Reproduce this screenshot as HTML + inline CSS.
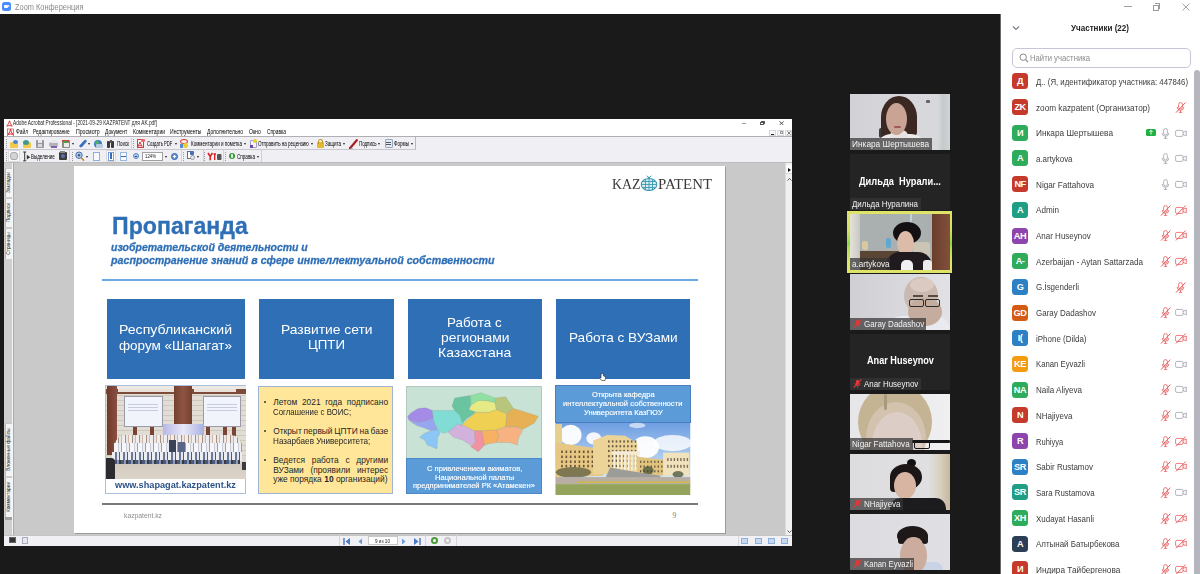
<!DOCTYPE html>
<html><head><meta charset="utf-8"><style>
*{margin:0;padding:0;box-sizing:border-box}
html,body{width:1200px;height:574px;overflow:hidden;background:#1a1a1a;font-family:"Liberation Sans",sans-serif}
.a{position:absolute}
.av{position:absolute;left:1012px;width:16px;height:16px;border-radius:3.5px;color:#fff;font-weight:bold;font-size:9.2px;line-height:16.5px;text-align:center;letter-spacing:-0.5px}
.pn{position:absolute;left:1036px;font-size:10.5px;color:#3a3a3a;line-height:16px;white-space:nowrap}
.ic{position:absolute}
.tile{position:absolute;left:850px;width:100px;height:56px;overflow:hidden;background:#242424}
.lbl{position:absolute;left:0;bottom:0;height:12px;background:rgba(20,20,20,.65);color:#eee;font-size:8.5px;line-height:12px;padding:0 3px;white-space:nowrap}
.mt{font-size:6px;color:#222;white-space:nowrap;position:absolute;line-height:8px}
.bx{position:absolute;background:#2f70b7;color:#fff;text-align:center;display:flex;align-items:center;justify-content:center;font-size:13px;line-height:15px}

.sl{font-family:"Liberation Sans",sans-serif}
</style></head><body>
<div class="a" style="left:0;top:0;width:1001px;height:14px;background:#fff"></div>
<div class="a" style="left:2px;top:2px;width:9px;height:9px;border-radius:2.5px;background:#4a8cff"></div>
<div class="a" style="left:4px;top:5px;width:4px;height:3px;background:#fff;border-radius:1px"></div>
<div class="a" style="left:8px;top:5px;width:0;height:0;border-top:1.5px solid transparent;border-bottom:1.5px solid transparent;border-left:2px solid #fff"></div>
<div style="position:absolute;left:14.50px;top:1.66px;font-family:'Liberation Sans',sans-serif;font-size:8.6px;line-height:10.32px;color:#8a8a8a;white-space:nowrap;transform:scaleX(0.8619);transform-origin:0 0;">Zoom Конференция</div>
<div class="a" style="left:1000px;top:14px;width:1px;height:560px;background:#6a6a6a"></div>
<div class="a" style="left:1001px;top:0;width:199px;height:574px;background:#fff"></div>
<div class="a" style="left:1124px;top:6px;width:7.5px;height:1px;background:#a0a0a0"></div>
<div class="a" style="left:1153px;top:5px;width:5.5px;height:5.5px;border:1px solid #9a9a9a;background:#fff"></div>
<div class="a" style="left:1154.8px;top:3.2px;width:5.5px;height:5.5px;border-top:1px solid #9a9a9a;border-right:1px solid #9a9a9a"></div>
<svg class="a" style="left:1182px;top:3px" width="8" height="8"><path d="M0.5 0.5L7.5 7.5M7.5 0.5L0.5 7.5" stroke="#9a9a9a" stroke-width="0.9"/></svg>
<svg class="a" style="left:1012px;top:25px" width="8" height="6"><path d="M1 1.5L4 4.5L7 1.5" stroke="#7a7a8a" stroke-width="1.2" fill="none"/></svg>
<div style="position:absolute;left:1071.00px;top:22.01px;font-family:'Liberation Sans',sans-serif;font-size:9.5px;line-height:11.40px;color:#232323;white-space:nowrap;font-weight:bold;transform:scaleX(0.8485);transform-origin:0 0;">Участники (22)</div>
<div class="a" style="left:1012px;top:48px;width:179px;height:20px;border:1px solid #c6c6d8;border-radius:5px;background:#fff"></div>
<svg class="a" style="left:1019px;top:53px" width="10" height="10"><circle cx="4.2" cy="4.2" r="3.2" stroke="#8a8a8a" stroke-width="1" fill="none"/><path d="M6.6 6.6L9 9" stroke="#8a8a8a" stroke-width="1.1"/></svg>
<div style="position:absolute;left:1030.00px;top:52.01px;font-family:'Liberation Sans',sans-serif;font-size:9.5px;line-height:11.40px;color:#8c8c8c;white-space:nowrap;transform:scaleX(0.8104);transform-origin:0 0;">Найти участника</div>
<div class="a" style="left:1194px;top:70px;width:6px;height:504px;background:#b6b6be;border-radius:3px 3px 0 0"></div>
<div class="av" style="top:73.4px;background:#c63a2c">Д</div>
<div style="position:absolute;left:1036.00px;top:76.01px;font-family:'Liberation Sans',sans-serif;font-size:9.5px;line-height:11.40px;color:#3c3c3c;white-space:nowrap;transform:scaleX(0.8210);transform-origin:0 0;">Д.. (Я, идентификатор участника: 447846)</div>
<div class="av" style="top:99.1px;background:#c63a2c">ZK</div>
<div style="position:absolute;left:1036.00px;top:101.69px;font-family:'Liberation Sans',sans-serif;font-size:9.5px;line-height:11.40px;color:#3c3c3c;white-space:nowrap;transform:scaleX(0.8634);transform-origin:0 0;">zoom kazpatent (Организатор)</div>
<svg class="ic" style="left:1175px;top:101.9px" width="11" height="11" viewBox="0 0 11 11"><rect x="3.6" y="0.6" width="3.8" height="6.4" rx="1.9" fill="none" stroke="#e85a5c" stroke-width="0.8"/><path d="M2.2 5Q2.2 8.3 5.5 8.3Q8.8 8.3 8.8 5M5.5 8.3V10.4M3.8 10.4H7.2" fill="none" stroke="#e85a5c" stroke-width="0.8"/><path d="M1 10.6L10.4 0.6" stroke="#e85a5c" stroke-width="1"/></svg>
<div class="av" style="top:124.8px;background:#2eab5b">И</div>
<div style="position:absolute;left:1036.00px;top:127.37px;font-family:'Liberation Sans',sans-serif;font-size:9.5px;line-height:11.40px;color:#3c3c3c;white-space:nowrap;transform:scaleX(0.8720);transform-origin:0 0;">Инкара Шертышева</div>
<div class="a" style="left:1145.5px;top:128.7px;width:10px;height:7.5px;background:#1fb141;border-radius:1.5px"></div>
<svg class="ic" style="left:1147.5px;top:129.4px" width="6" height="6"><path d="M3 5.6V1.4M1.3 3L3 1.3L4.7 3" stroke="#fff" stroke-width="0.9" fill="none"/></svg>
<svg class="ic" style="left:1160px;top:127.6px" width="11" height="11" viewBox="0 0 11 11"><rect x="3.6" y="0.6" width="3.8" height="6.4" rx="1.9" fill="none" stroke="#a0a0aa" stroke-width="0.8"/><path d="M2.2 5Q2.2 8.3 5.5 8.3Q8.8 8.3 8.8 5M5.5 8.3V10.4M3.8 10.4H7.2" fill="none" stroke="#a0a0aa" stroke-width="0.8"/></svg>
<svg class="ic" style="left:1175px;top:127.6px" width="12" height="11" viewBox="0 0 12 11"><rect x="0.6" y="2.4" width="7.4" height="6" rx="1.2" fill="none" stroke="#a0a0aa" stroke-width="0.8"/><path d="M8 4.4L11.3 3V7.8L8 6.4" fill="none" stroke="#a0a0aa" stroke-width="0.8"/></svg>
<div class="av" style="top:150.4px;background:#2eab5b">A</div>
<div style="position:absolute;left:1036.00px;top:153.05px;font-family:'Liberation Sans',sans-serif;font-size:9.5px;line-height:11.40px;color:#3c3c3c;white-space:nowrap;transform:scaleX(0.8328);transform-origin:0 0;">a.artykova</div>
<svg class="ic" style="left:1160px;top:153.2px" width="11" height="11" viewBox="0 0 11 11"><rect x="3.6" y="0.6" width="3.8" height="6.4" rx="1.9" fill="none" stroke="#a0a0aa" stroke-width="0.8"/><path d="M2.2 5Q2.2 8.3 5.5 8.3Q8.8 8.3 8.8 5M5.5 8.3V10.4M3.8 10.4H7.2" fill="none" stroke="#a0a0aa" stroke-width="0.8"/></svg>
<svg class="ic" style="left:1175px;top:153.2px" width="12" height="11" viewBox="0 0 12 11"><rect x="0.6" y="2.4" width="7.4" height="6" rx="1.2" fill="none" stroke="#a0a0aa" stroke-width="0.8"/><path d="M8 4.4L11.3 3V7.8L8 6.4" fill="none" stroke="#a0a0aa" stroke-width="0.8"/></svg>
<div class="av" style="top:176.1px;background:#c63a2c">NF</div>
<div style="position:absolute;left:1036.00px;top:178.73px;font-family:'Liberation Sans',sans-serif;font-size:9.5px;line-height:11.40px;color:#3c3c3c;white-space:nowrap;transform:scaleX(0.8581);transform-origin:0 0;">Nigar Fattahova</div>
<svg class="ic" style="left:1160px;top:178.9px" width="11" height="11" viewBox="0 0 11 11"><rect x="3.6" y="0.6" width="3.8" height="6.4" rx="1.9" fill="none" stroke="#a0a0aa" stroke-width="0.8"/><path d="M2.2 5Q2.2 8.3 5.5 8.3Q8.8 8.3 8.8 5M5.5 8.3V10.4M3.8 10.4H7.2" fill="none" stroke="#a0a0aa" stroke-width="0.8"/></svg>
<svg class="ic" style="left:1175px;top:178.9px" width="12" height="11" viewBox="0 0 12 11"><rect x="0.6" y="2.4" width="7.4" height="6" rx="1.2" fill="none" stroke="#a0a0aa" stroke-width="0.8"/><path d="M8 4.4L11.3 3V7.8L8 6.4" fill="none" stroke="#a0a0aa" stroke-width="0.8"/></svg>
<div class="av" style="top:201.8px;background:#1f9e84">A</div>
<div style="position:absolute;left:1036.00px;top:204.41px;font-family:'Liberation Sans',sans-serif;font-size:9.5px;line-height:11.40px;color:#3c3c3c;white-space:nowrap;transform:scaleX(0.8541);transform-origin:0 0;">Admin</div>
<svg class="ic" style="left:1160px;top:204.6px" width="11" height="11" viewBox="0 0 11 11"><rect x="3.6" y="0.6" width="3.8" height="6.4" rx="1.9" fill="none" stroke="#e85a5c" stroke-width="0.8"/><path d="M2.2 5Q2.2 8.3 5.5 8.3Q8.8 8.3 8.8 5M5.5 8.3V10.4M3.8 10.4H7.2" fill="none" stroke="#e85a5c" stroke-width="0.8"/><path d="M1 10.6L10.4 0.6" stroke="#e85a5c" stroke-width="1"/></svg>
<svg class="ic" style="left:1175px;top:204.6px" width="12" height="11" viewBox="0 0 12 11"><rect x="0.6" y="2.4" width="7.4" height="6" rx="1.2" fill="none" stroke="#e85a5c" stroke-width="0.8"/><path d="M8 4.4L11.3 3V7.8L8 6.4" fill="none" stroke="#e85a5c" stroke-width="0.8"/><path d="M1 10.4L10.6 0.6" stroke="#e85a5c" stroke-width="1"/></svg>
<div class="av" style="top:227.5px;background:#8e44ad">AH</div>
<div style="position:absolute;left:1036.00px;top:230.09px;font-family:'Liberation Sans',sans-serif;font-size:9.5px;line-height:11.40px;color:#3c3c3c;white-space:nowrap;transform:scaleX(0.8422);transform-origin:0 0;">Anar Huseynov</div>
<svg class="ic" style="left:1160px;top:230.3px" width="11" height="11" viewBox="0 0 11 11"><rect x="3.6" y="0.6" width="3.8" height="6.4" rx="1.9" fill="none" stroke="#e85a5c" stroke-width="0.8"/><path d="M2.2 5Q2.2 8.3 5.5 8.3Q8.8 8.3 8.8 5M5.5 8.3V10.4M3.8 10.4H7.2" fill="none" stroke="#e85a5c" stroke-width="0.8"/><path d="M1 10.6L10.4 0.6" stroke="#e85a5c" stroke-width="1"/></svg>
<svg class="ic" style="left:1175px;top:230.3px" width="12" height="11" viewBox="0 0 12 11"><rect x="0.6" y="2.4" width="7.4" height="6" rx="1.2" fill="none" stroke="#e85a5c" stroke-width="0.8"/><path d="M8 4.4L11.3 3V7.8L8 6.4" fill="none" stroke="#e85a5c" stroke-width="0.8"/><path d="M1 10.4L10.6 0.6" stroke="#e85a5c" stroke-width="1"/></svg>
<div class="av" style="top:253.2px;background:#2eab5b">A-</div>
<div style="position:absolute;left:1036.00px;top:255.77px;font-family:'Liberation Sans',sans-serif;font-size:9.5px;line-height:11.40px;color:#3c3c3c;white-space:nowrap;transform:scaleX(0.8525);transform-origin:0 0;">Azerbaijan - Aytan Sattarzada</div>
<svg class="ic" style="left:1160px;top:256.0px" width="11" height="11" viewBox="0 0 11 11"><rect x="3.6" y="0.6" width="3.8" height="6.4" rx="1.9" fill="none" stroke="#e85a5c" stroke-width="0.8"/><path d="M2.2 5Q2.2 8.3 5.5 8.3Q8.8 8.3 8.8 5M5.5 8.3V10.4M3.8 10.4H7.2" fill="none" stroke="#e85a5c" stroke-width="0.8"/><path d="M1 10.6L10.4 0.6" stroke="#e85a5c" stroke-width="1"/></svg>
<svg class="ic" style="left:1175px;top:256.0px" width="12" height="11" viewBox="0 0 12 11"><rect x="0.6" y="2.4" width="7.4" height="6" rx="1.2" fill="none" stroke="#e85a5c" stroke-width="0.8"/><path d="M8 4.4L11.3 3V7.8L8 6.4" fill="none" stroke="#e85a5c" stroke-width="0.8"/><path d="M1 10.4L10.6 0.6" stroke="#e85a5c" stroke-width="1"/></svg>
<div class="av" style="top:278.8px;background:#2d80c4">G</div>
<div style="position:absolute;left:1036.00px;top:281.45px;font-family:'Liberation Sans',sans-serif;font-size:9.5px;line-height:11.40px;color:#3c3c3c;white-space:nowrap;transform:scaleX(0.8395);transform-origin:0 0;">G.İsgenderli</div>
<svg class="ic" style="left:1175px;top:281.6px" width="11" height="11" viewBox="0 0 11 11"><rect x="3.6" y="0.6" width="3.8" height="6.4" rx="1.9" fill="none" stroke="#e85a5c" stroke-width="0.8"/><path d="M2.2 5Q2.2 8.3 5.5 8.3Q8.8 8.3 8.8 5M5.5 8.3V10.4M3.8 10.4H7.2" fill="none" stroke="#e85a5c" stroke-width="0.8"/><path d="M1 10.6L10.4 0.6" stroke="#e85a5c" stroke-width="1"/></svg>
<div class="av" style="top:304.5px;background:#d55a12">GD</div>
<div style="position:absolute;left:1036.00px;top:307.13px;font-family:'Liberation Sans',sans-serif;font-size:9.5px;line-height:11.40px;color:#3c3c3c;white-space:nowrap;transform:scaleX(0.8416);transform-origin:0 0;">Garay Dadashov</div>
<svg class="ic" style="left:1160px;top:307.3px" width="11" height="11" viewBox="0 0 11 11"><rect x="3.6" y="0.6" width="3.8" height="6.4" rx="1.9" fill="none" stroke="#e85a5c" stroke-width="0.8"/><path d="M2.2 5Q2.2 8.3 5.5 8.3Q8.8 8.3 8.8 5M5.5 8.3V10.4M3.8 10.4H7.2" fill="none" stroke="#e85a5c" stroke-width="0.8"/><path d="M1 10.6L10.4 0.6" stroke="#e85a5c" stroke-width="1"/></svg>
<svg class="ic" style="left:1175px;top:307.3px" width="12" height="11" viewBox="0 0 12 11"><rect x="0.6" y="2.4" width="7.4" height="6" rx="1.2" fill="none" stroke="#a0a0aa" stroke-width="0.8"/><path d="M8 4.4L11.3 3V7.8L8 6.4" fill="none" stroke="#a0a0aa" stroke-width="0.8"/></svg>
<div class="av" style="top:330.2px;background:#2d80c4">I(</div>
<div style="position:absolute;left:1036.00px;top:332.81px;font-family:'Liberation Sans',sans-serif;font-size:9.5px;line-height:11.40px;color:#3c3c3c;white-space:nowrap;transform:scaleX(0.8389);transform-origin:0 0;">iPhone (Dilda)</div>
<svg class="ic" style="left:1160px;top:333.0px" width="11" height="11" viewBox="0 0 11 11"><rect x="3.6" y="0.6" width="3.8" height="6.4" rx="1.9" fill="none" stroke="#e85a5c" stroke-width="0.8"/><path d="M2.2 5Q2.2 8.3 5.5 8.3Q8.8 8.3 8.8 5M5.5 8.3V10.4M3.8 10.4H7.2" fill="none" stroke="#e85a5c" stroke-width="0.8"/><path d="M1 10.6L10.4 0.6" stroke="#e85a5c" stroke-width="1"/></svg>
<svg class="ic" style="left:1175px;top:333.0px" width="12" height="11" viewBox="0 0 12 11"><rect x="0.6" y="2.4" width="7.4" height="6" rx="1.2" fill="none" stroke="#e85a5c" stroke-width="0.8"/><path d="M8 4.4L11.3 3V7.8L8 6.4" fill="none" stroke="#e85a5c" stroke-width="0.8"/><path d="M1 10.4L10.6 0.6" stroke="#e85a5c" stroke-width="1"/></svg>
<div class="av" style="top:355.9px;background:#f39c12">KE</div>
<div style="position:absolute;left:1036.00px;top:358.49px;font-family:'Liberation Sans',sans-serif;font-size:9.5px;line-height:11.40px;color:#3c3c3c;white-space:nowrap;transform:scaleX(0.8139);transform-origin:0 0;">Kanan Eyvazli</div>
<svg class="ic" style="left:1160px;top:358.7px" width="11" height="11" viewBox="0 0 11 11"><rect x="3.6" y="0.6" width="3.8" height="6.4" rx="1.9" fill="none" stroke="#e85a5c" stroke-width="0.8"/><path d="M2.2 5Q2.2 8.3 5.5 8.3Q8.8 8.3 8.8 5M5.5 8.3V10.4M3.8 10.4H7.2" fill="none" stroke="#e85a5c" stroke-width="0.8"/><path d="M1 10.6L10.4 0.6" stroke="#e85a5c" stroke-width="1"/></svg>
<svg class="ic" style="left:1175px;top:358.7px" width="12" height="11" viewBox="0 0 12 11"><rect x="0.6" y="2.4" width="7.4" height="6" rx="1.2" fill="none" stroke="#a0a0aa" stroke-width="0.8"/><path d="M8 4.4L11.3 3V7.8L8 6.4" fill="none" stroke="#a0a0aa" stroke-width="0.8"/></svg>
<div class="av" style="top:381.6px;background:#2eab5b">NA</div>
<div style="position:absolute;left:1036.00px;top:384.17px;font-family:'Liberation Sans',sans-serif;font-size:9.5px;line-height:11.40px;color:#3c3c3c;white-space:nowrap;transform:scaleX(0.8457);transform-origin:0 0;">Naila Aliyeva</div>
<svg class="ic" style="left:1160px;top:384.4px" width="11" height="11" viewBox="0 0 11 11"><rect x="3.6" y="0.6" width="3.8" height="6.4" rx="1.9" fill="none" stroke="#e85a5c" stroke-width="0.8"/><path d="M2.2 5Q2.2 8.3 5.5 8.3Q8.8 8.3 8.8 5M5.5 8.3V10.4M3.8 10.4H7.2" fill="none" stroke="#e85a5c" stroke-width="0.8"/><path d="M1 10.6L10.4 0.6" stroke="#e85a5c" stroke-width="1"/></svg>
<svg class="ic" style="left:1175px;top:384.4px" width="12" height="11" viewBox="0 0 12 11"><rect x="0.6" y="2.4" width="7.4" height="6" rx="1.2" fill="none" stroke="#a0a0aa" stroke-width="0.8"/><path d="M8 4.4L11.3 3V7.8L8 6.4" fill="none" stroke="#a0a0aa" stroke-width="0.8"/></svg>
<div class="av" style="top:407.2px;background:#c63a2c">N</div>
<div style="position:absolute;left:1036.00px;top:409.85px;font-family:'Liberation Sans',sans-serif;font-size:9.5px;line-height:11.40px;color:#3c3c3c;white-space:nowrap;transform:scaleX(0.8408);transform-origin:0 0;">NHajiyeva</div>
<svg class="ic" style="left:1160px;top:410.0px" width="11" height="11" viewBox="0 0 11 11"><rect x="3.6" y="0.6" width="3.8" height="6.4" rx="1.9" fill="none" stroke="#e85a5c" stroke-width="0.8"/><path d="M2.2 5Q2.2 8.3 5.5 8.3Q8.8 8.3 8.8 5M5.5 8.3V10.4M3.8 10.4H7.2" fill="none" stroke="#e85a5c" stroke-width="0.8"/><path d="M1 10.6L10.4 0.6" stroke="#e85a5c" stroke-width="1"/></svg>
<svg class="ic" style="left:1175px;top:410.0px" width="12" height="11" viewBox="0 0 12 11"><rect x="0.6" y="2.4" width="7.4" height="6" rx="1.2" fill="none" stroke="#a0a0aa" stroke-width="0.8"/><path d="M8 4.4L11.3 3V7.8L8 6.4" fill="none" stroke="#a0a0aa" stroke-width="0.8"/></svg>
<div class="av" style="top:432.9px;background:#8e44ad">R</div>
<div style="position:absolute;left:1036.00px;top:435.53px;font-family:'Liberation Sans',sans-serif;font-size:9.5px;line-height:11.40px;color:#3c3c3c;white-space:nowrap;transform:scaleX(0.7954);transform-origin:0 0;">Ruhiyya</div>
<svg class="ic" style="left:1160px;top:435.7px" width="11" height="11" viewBox="0 0 11 11"><rect x="3.6" y="0.6" width="3.8" height="6.4" rx="1.9" fill="none" stroke="#e85a5c" stroke-width="0.8"/><path d="M2.2 5Q2.2 8.3 5.5 8.3Q8.8 8.3 8.8 5M5.5 8.3V10.4M3.8 10.4H7.2" fill="none" stroke="#e85a5c" stroke-width="0.8"/><path d="M1 10.6L10.4 0.6" stroke="#e85a5c" stroke-width="1"/></svg>
<svg class="ic" style="left:1175px;top:435.7px" width="12" height="11" viewBox="0 0 12 11"><rect x="0.6" y="2.4" width="7.4" height="6" rx="1.2" fill="none" stroke="#e85a5c" stroke-width="0.8"/><path d="M8 4.4L11.3 3V7.8L8 6.4" fill="none" stroke="#e85a5c" stroke-width="0.8"/><path d="M1 10.4L10.6 0.6" stroke="#e85a5c" stroke-width="1"/></svg>
<div class="av" style="top:458.6px;background:#2d80c4">SR</div>
<div style="position:absolute;left:1036.00px;top:461.21px;font-family:'Liberation Sans',sans-serif;font-size:9.5px;line-height:11.40px;color:#3c3c3c;white-space:nowrap;transform:scaleX(0.8434);transform-origin:0 0;">Sabir Rustamov</div>
<svg class="ic" style="left:1160px;top:461.4px" width="11" height="11" viewBox="0 0 11 11"><rect x="3.6" y="0.6" width="3.8" height="6.4" rx="1.9" fill="none" stroke="#e85a5c" stroke-width="0.8"/><path d="M2.2 5Q2.2 8.3 5.5 8.3Q8.8 8.3 8.8 5M5.5 8.3V10.4M3.8 10.4H7.2" fill="none" stroke="#e85a5c" stroke-width="0.8"/><path d="M1 10.6L10.4 0.6" stroke="#e85a5c" stroke-width="1"/></svg>
<svg class="ic" style="left:1175px;top:461.4px" width="12" height="11" viewBox="0 0 12 11"><rect x="0.6" y="2.4" width="7.4" height="6" rx="1.2" fill="none" stroke="#e85a5c" stroke-width="0.8"/><path d="M8 4.4L11.3 3V7.8L8 6.4" fill="none" stroke="#e85a5c" stroke-width="0.8"/><path d="M1 10.4L10.6 0.6" stroke="#e85a5c" stroke-width="1"/></svg>
<div class="av" style="top:484.3px;background:#1f9e84">SR</div>
<div style="position:absolute;left:1036.00px;top:486.89px;font-family:'Liberation Sans',sans-serif;font-size:9.5px;line-height:11.40px;color:#3c3c3c;white-space:nowrap;transform:scaleX(0.8268);transform-origin:0 0;">Sara Rustamova</div>
<svg class="ic" style="left:1160px;top:487.1px" width="11" height="11" viewBox="0 0 11 11"><rect x="3.6" y="0.6" width="3.8" height="6.4" rx="1.9" fill="none" stroke="#e85a5c" stroke-width="0.8"/><path d="M2.2 5Q2.2 8.3 5.5 8.3Q8.8 8.3 8.8 5M5.5 8.3V10.4M3.8 10.4H7.2" fill="none" stroke="#e85a5c" stroke-width="0.8"/><path d="M1 10.6L10.4 0.6" stroke="#e85a5c" stroke-width="1"/></svg>
<svg class="ic" style="left:1175px;top:487.1px" width="12" height="11" viewBox="0 0 12 11"><rect x="0.6" y="2.4" width="7.4" height="6" rx="1.2" fill="none" stroke="#a0a0aa" stroke-width="0.8"/><path d="M8 4.4L11.3 3V7.8L8 6.4" fill="none" stroke="#a0a0aa" stroke-width="0.8"/></svg>
<div class="av" style="top:510.0px;background:#2eab5b">XH</div>
<div style="position:absolute;left:1036.00px;top:512.57px;font-family:'Liberation Sans',sans-serif;font-size:9.5px;line-height:11.40px;color:#3c3c3c;white-space:nowrap;transform:scaleX(0.8384);transform-origin:0 0;">Xudayat Hasanli</div>
<svg class="ic" style="left:1160px;top:512.8px" width="11" height="11" viewBox="0 0 11 11"><rect x="3.6" y="0.6" width="3.8" height="6.4" rx="1.9" fill="none" stroke="#e85a5c" stroke-width="0.8"/><path d="M2.2 5Q2.2 8.3 5.5 8.3Q8.8 8.3 8.8 5M5.5 8.3V10.4M3.8 10.4H7.2" fill="none" stroke="#e85a5c" stroke-width="0.8"/><path d="M1 10.6L10.4 0.6" stroke="#e85a5c" stroke-width="1"/></svg>
<svg class="ic" style="left:1175px;top:512.8px" width="12" height="11" viewBox="0 0 12 11"><rect x="0.6" y="2.4" width="7.4" height="6" rx="1.2" fill="none" stroke="#e85a5c" stroke-width="0.8"/><path d="M8 4.4L11.3 3V7.8L8 6.4" fill="none" stroke="#e85a5c" stroke-width="0.8"/><path d="M1 10.4L10.6 0.6" stroke="#e85a5c" stroke-width="1"/></svg>
<div class="av" style="top:535.6px;background:#2c3e55">A</div>
<div style="position:absolute;left:1036.00px;top:538.25px;font-family:'Liberation Sans',sans-serif;font-size:9.5px;line-height:11.40px;color:#3c3c3c;white-space:nowrap;transform:scaleX(0.8365);transform-origin:0 0;">Алтынай Батырбекова</div>
<svg class="ic" style="left:1160px;top:538.4px" width="11" height="11" viewBox="0 0 11 11"><rect x="3.6" y="0.6" width="3.8" height="6.4" rx="1.9" fill="none" stroke="#e85a5c" stroke-width="0.8"/><path d="M2.2 5Q2.2 8.3 5.5 8.3Q8.8 8.3 8.8 5M5.5 8.3V10.4M3.8 10.4H7.2" fill="none" stroke="#e85a5c" stroke-width="0.8"/><path d="M1 10.6L10.4 0.6" stroke="#e85a5c" stroke-width="1"/></svg>
<svg class="ic" style="left:1175px;top:538.4px" width="12" height="11" viewBox="0 0 12 11"><rect x="0.6" y="2.4" width="7.4" height="6" rx="1.2" fill="none" stroke="#e85a5c" stroke-width="0.8"/><path d="M8 4.4L11.3 3V7.8L8 6.4" fill="none" stroke="#e85a5c" stroke-width="0.8"/><path d="M1 10.4L10.6 0.6" stroke="#e85a5c" stroke-width="1"/></svg>
<div class="av" style="top:561.3px;background:#c63a2c">И</div>
<div style="position:absolute;left:1036.00px;top:563.93px;font-family:'Liberation Sans',sans-serif;font-size:9.5px;line-height:11.40px;color:#3c3c3c;white-space:nowrap;transform:scaleX(0.8665);transform-origin:0 0;">Индира Тайбергенова</div>
<svg class="ic" style="left:1160px;top:564.1px" width="11" height="11" viewBox="0 0 11 11"><rect x="3.6" y="0.6" width="3.8" height="6.4" rx="1.9" fill="none" stroke="#e85a5c" stroke-width="0.8"/><path d="M2.2 5Q2.2 8.3 5.5 8.3Q8.8 8.3 8.8 5M5.5 8.3V10.4M3.8 10.4H7.2" fill="none" stroke="#e85a5c" stroke-width="0.8"/><path d="M1 10.6L10.4 0.6" stroke="#e85a5c" stroke-width="1"/></svg>
<svg class="ic" style="left:1175px;top:564.1px" width="12" height="11" viewBox="0 0 12 11"><rect x="0.6" y="2.4" width="7.4" height="6" rx="1.2" fill="none" stroke="#e85a5c" stroke-width="0.8"/><path d="M8 4.4L11.3 3V7.8L8 6.4" fill="none" stroke="#e85a5c" stroke-width="0.8"/><path d="M1 10.4L10.6 0.6" stroke="#e85a5c" stroke-width="1"/></svg>
<div class="tile" style="top:94px;height:56px"><div class="a" style="left:0;top:0;width:100px;height:56px;filter:blur(0.7px)"><div class="a" style="left:0px;top:0px;width:100px;height:56px;background:linear-gradient(90deg,#d2d2d6 0%,#d8d8dc 60%,#d6d8da 88%,#c4cacc 93%,#d0d4d4 100%);border-radius:0;"></div><div class="a" style="left:76px;top:6px;width:4px;height:3px;background:#666;border-radius:1px;"></div><div class="a" style="left:29px;top:34px;width:8px;height:10px;background:#3a3a3a;border-radius:2px;"></div><div class="a" style="left:31px;top:2px;width:36px;height:42px;background:#3c2822;border-radius:50%;"></div><div class="a" style="left:31px;top:22px;width:10px;height:24px;background:#3c2822;border-radius:0 0 4px 6px;"></div><div class="a" style="left:57px;top:22px;width:10px;height:22px;background:#3c2822;border-radius:0 0 6px 4px;"></div><div class="a" style="left:24px;top:40px;width:54px;height:18px;background:#edeaea;border-radius:18px 18px 0 0;"></div><div class="a" style="left:40px;top:36px;width:18px;height:12px;background:#e8e2e0;border-radius:6px;"></div><div class="a" style="left:36px;top:9px;width:21px;height:32px;background:#c9a394;border-radius:50%;"></div><div class="a" style="left:44px;top:32px;width:7px;height:2px;background:#a05a5a;border-radius:1px;"></div></div><div class="a" style="left:0;top:44px;width:81.6px;height:12px;background:rgba(52,52,54,.72)"></div><div style="position:absolute;left:2.20px;top:44.66px;font-family:'Liberation Sans',sans-serif;font-size:8.6px;line-height:10.32px;color:#f2f2f2;white-space:nowrap;transform:scaleX(0.9670);transform-origin:0 0;">Инкара Шертышева</div></div>
<div class="tile" style="top:154px;height:56px"><div style="position:absolute;left:8.50px;top:21.76px;font-family:'Liberation Sans',sans-serif;font-size:10.4px;line-height:12.48px;color:#ffffff;white-space:pre;font-weight:bold;transform:scaleX(0.8920);transform-origin:0 0;">Дильда  Нурали...</div><div class="a" style="left:0;top:44px;width:70.5px;height:12px;background:rgba(52,52,54,.72)"></div><div style="position:absolute;left:2.20px;top:44.66px;font-family:'Liberation Sans',sans-serif;font-size:8.6px;line-height:10.32px;color:#f2f2f2;white-space:nowrap;transform:scaleX(0.9211);transform-origin:0 0;">Дильда Нуралина</div></div>
<div class="a" style="left:847.2px;top:210.9px;width:105.2px;height:62.1px;background:linear-gradient(180deg,#dde468 0%,#d4e262 30%,#a2dc48 48%,#8cd840 52%,#b0de50 60%,#dde468 80%,#dde468 100%)"></div>
<div class="a" style="left:850px;top:211px;width:100px;height:2.5px;background:#dde468"></div><div class="a" style="left:850px;top:270.3px;width:100px;height:2.7px;background:#dde468"></div>
<div class="tile" style="top:213.5px;height:56.5px"><div class="a" style="left:0;top:0;width:100px;height:56.5px;filter:blur(0.7px)"><div class="a" style="left:0px;top:0px;width:100px;height:57px;background:#aab0b0;border-radius:0;"></div><div class="a" style="left:0px;top:0px;width:10px;height:57px;background:linear-gradient(90deg,#e4e2da,#c8c8c2);border-radius:0;"></div><div class="a" style="left:60px;top:0px;width:2px;height:30px;background:#c0d0d8;border-radius:0;"></div><div class="a" style="left:82px;top:0px;width:18px;height:57px;background:linear-gradient(90deg,#6a3e2c,#82503c);border-radius:0;"></div><div class="a" style="left:10px;top:37px;width:44px;height:20px;background:#5a4434;border-radius:0;"></div><div class="a" style="left:12px;top:27px;width:6px;height:9px;background:#d8c8a0;border-radius:2px;"></div><div class="a" style="left:36px;top:24px;width:5px;height:10px;background:#60a8d0;border-radius:2px;"></div><div class="a" style="left:63px;top:28px;width:17px;height:29px;background:#ccc4b4;border-radius:3px;"></div><div class="a" style="left:43px;top:8px;width:28px;height:22px;background:#141012;border-radius:50%;"></div><div class="a" style="left:47px;top:17px;width:17px;height:25px;background:#dcbca8;border-radius:50%;"></div><div class="a" style="left:36px;top:38px;width:46px;height:19px;background:#201a1e;border-radius:14px 14px 0 0;"></div><div class="a" style="left:73px;top:46px;width:9px;height:11px;background:#ececec;border-radius:3px 3px 0 0;"></div><div class="a" style="left:51px;top:46px;width:12px;height:11px;background:#f2f0f0;border-radius:5px 5px 0 0;"></div></div><div class="a" style="left:0;top:44.5px;width:40px;height:12px;background:rgba(52,52,54,.72)"></div><div style="position:absolute;left:2.20px;top:45.16px;font-family:'Liberation Sans',sans-serif;font-size:8.6px;line-height:10.32px;color:#f2f2f2;white-space:nowrap;transform:scaleX(0.9452);transform-origin:0 0;">a.artykova</div></div>
<div class="tile" style="top:274px;height:56px"><div class="a" style="left:0;top:0;width:100px;height:56px;filter:blur(0.7px)"><div class="a" style="left:0px;top:0px;width:100px;height:56px;background:linear-gradient(90deg,#d0d0d4,#dadade 60%,#e2e2e6);border-radius:0;"></div><div class="a" style="left:38px;top:42px;width:62px;height:14px;background:#e8eaf0;border-radius:14px 14px 0 0;"></div><div class="a" style="left:54px;top:3px;width:34px;height:37px;background:#cbb8ae;border-radius:50%;"></div><div class="a" style="left:58px;top:24px;width:34px;height:28px;background:#c4ac9e;border-radius:50%;"></div><div class="a" style="left:60px;top:4px;width:24px;height:14px;background:#dacac2;border-radius:50%;"></div><div class="a" style="left:59px;top:25px;width:15px;height:8px;background:transparent;border-radius:2px;border:1px solid #2a2a2a"></div><div class="a" style="left:75px;top:25px;width:15px;height:8px;background:transparent;border-radius:2px;border:1px solid #2a2a2a"></div><div class="a" style="left:63px;top:21px;width:10px;height:1.5px;background:#5a4a44;border-radius:0;"></div><div class="a" style="left:78px;top:21px;width:10px;height:1.5px;background:#5a4a44;border-radius:0;"></div></div><div class="a" style="left:0;top:44px;width:76.4px;height:12px;background:rgba(52,52,54,.72)"></div><div style="position:absolute;left:13.70px;top:44.66px;font-family:'Liberation Sans',sans-serif;font-size:8.6px;line-height:10.32px;color:#f2f2f2;white-space:nowrap;transform:scaleX(0.9344);transform-origin:0 0;">Garay Dadashov</div><svg class="a" style="left:2.5px;top:45px" width="9" height="9" viewBox="0 0 11 11"><rect x="3.6" y="0.8" width="3.8" height="6.2" rx="1.9" fill="#e03838"/><path d="M2.2 5Q2.2 8.3 5.5 8.3Q8.8 8.3 8.8 5M5.5 8.3V10.4" fill="none" stroke="#e03838" stroke-width="1.1"/><path d="M0.8 10.4L10.2 0.6" stroke="#e03838" stroke-width="1.3"/></svg></div>
<div class="tile" style="top:334px;height:56px"><div style="position:absolute;left:16.80px;top:20.76px;font-family:'Liberation Sans',sans-serif;font-size:10.4px;line-height:12.48px;color:#ffffff;white-space:nowrap;font-weight:bold;transform:scaleX(0.8782);transform-origin:0 0;">Anar Huseynov</div><div class="a" style="left:0;top:44px;width:70.7px;height:12px;background:rgba(52,52,54,.72)"></div><div style="position:absolute;left:13.70px;top:44.66px;font-family:'Liberation Sans',sans-serif;font-size:8.6px;line-height:10.32px;color:#f2f2f2;white-space:nowrap;transform:scaleX(0.9235);transform-origin:0 0;">Anar Huseynov</div><svg class="a" style="left:2.5px;top:45px" width="9" height="9" viewBox="0 0 11 11"><rect x="3.6" y="0.8" width="3.8" height="6.2" rx="1.9" fill="#e03838"/><path d="M2.2 5Q2.2 8.3 5.5 8.3Q8.8 8.3 8.8 5M5.5 8.3V10.4" fill="none" stroke="#e03838" stroke-width="1.1"/><path d="M0.8 10.4L10.2 0.6" stroke="#e03838" stroke-width="1.3"/></svg></div>
<div class="tile" style="top:394px;height:56px"><div class="a" style="left:0;top:0;width:100px;height:56px;filter:blur(0.7px)"><div class="a" style="left:0px;top:0px;width:100px;height:56px;background:linear-gradient(90deg,#e6e6e8,#ececee 70%,#f0f0f2);border-radius:0;"></div><div class="a" style="left:8px;top:-10px;width:74px;height:76px;background:#c4b494;border-radius:50%;"></div><div class="a" style="left:16px;top:8px;width:60px;height:72px;background:#d2c2ae;border-radius:50%;"></div><div class="a" style="left:22px;top:18px;width:50px;height:66px;background:#dccec6;border-radius:50%;"></div><div class="a" style="left:34px;top:0px;width:3px;height:16px;background:#a89a7c;border-radius:2px;"></div><div class="a" style="left:62px;top:46px;width:38px;height:2.5px;background:#161616;border-radius:1px;"></div><div class="a" style="left:64px;top:46px;width:16px;height:9px;background:transparent;border-radius:2px;border:1.5px solid #161616"></div></div><div class="a" style="left:0;top:44px;width:62.8px;height:12px;background:rgba(52,52,54,.72)"></div><div style="position:absolute;left:2.20px;top:44.66px;font-family:'Liberation Sans',sans-serif;font-size:8.6px;line-height:10.32px;color:#f2f2f2;white-space:nowrap;transform:scaleX(0.9430);transform-origin:0 0;">Nigar Fattahova</div></div>
<div class="tile" style="top:454px;height:56px"><div class="a" style="left:0;top:0;width:100px;height:56px;filter:blur(0.7px)"><div class="a" style="left:0px;top:0px;width:100px;height:56px;background:linear-gradient(90deg,#dcdcde 0%,#e0e0e2 78%,#d8d0c0 90%,#c8b89e 100%);border-radius:0;"></div><div class="a" style="left:57px;top:5px;width:9px;height:8px;background:#141010;border-radius:50%;"></div><div class="a" style="left:40px;top:10px;width:32px;height:26px;background:#1c1616;border-radius:50%;"></div><div class="a" style="left:40px;top:22px;width:8px;height:16px;background:#1c1616;border-radius:0 0 4px 4px;"></div><div class="a" style="left:44px;top:18px;width:22px;height:27px;background:#d8b4a2;border-radius:50%;"></div><div class="a" style="left:40px;top:44px;width:56px;height:12px;background:#1c1c1e;border-radius:10px 10px 0 0;"></div></div><div class="a" style="left:0;top:44px;width:52.6px;height:12px;background:rgba(52,52,54,.72)"></div><div style="position:absolute;left:13.70px;top:44.66px;font-family:'Liberation Sans',sans-serif;font-size:8.6px;line-height:10.32px;color:#f2f2f2;white-space:nowrap;transform:scaleX(0.9339);transform-origin:0 0;">NHajiyeva</div><svg class="a" style="left:2.5px;top:45px" width="9" height="9" viewBox="0 0 11 11"><rect x="3.6" y="0.8" width="3.8" height="6.2" rx="1.9" fill="#e03838"/><path d="M2.2 5Q2.2 8.3 5.5 8.3Q8.8 8.3 8.8 5M5.5 8.3V10.4" fill="none" stroke="#e03838" stroke-width="1.1"/><path d="M0.8 10.4L10.2 0.6" stroke="#e03838" stroke-width="1.3"/></svg></div>
<div class="tile" style="top:514px;height:56.2px"><div class="a" style="left:0;top:0;width:100px;height:56.2px;filter:blur(0.7px)"><div class="a" style="left:0px;top:0px;width:100px;height:56px;background:linear-gradient(90deg,#dcdce0,#e0e0e4);border-radius:0;"></div><div class="a" style="left:55px;top:48px;width:38px;height:9px;background:#c8d4e6;border-radius:8px 8px 0 0;"></div><div class="a" style="left:47px;top:12px;width:31px;height:20px;background:#1e1818;border-radius:50%;"></div><div class="a" style="left:50px;top:23px;width:27px;height:37px;background:#ccac9c;border-radius:50%;"></div><div class="a" style="left:48px;top:20px;width:6px;height:10px;background:#1e1818;border-radius:3px;"></div><div class="a" style="left:72px;top:20px;width:6px;height:10px;background:#1e1818;border-radius:3px;"></div></div><div class="a" style="left:0;top:44.2px;width:64.3px;height:12px;background:rgba(52,52,54,.72)"></div><div style="position:absolute;left:13.70px;top:44.86px;font-family:'Liberation Sans',sans-serif;font-size:8.6px;line-height:10.32px;color:#f2f2f2;white-space:nowrap;transform:scaleX(0.8991);transform-origin:0 0;">Kanan Eyvazli</div><svg class="a" style="left:2.5px;top:45.2px" width="9" height="9" viewBox="0 0 11 11"><rect x="3.6" y="0.8" width="3.8" height="6.2" rx="1.9" fill="#e03838"/><path d="M2.2 5Q2.2 8.3 5.5 8.3Q8.8 8.3 8.8 5M5.5 8.3V10.4" fill="none" stroke="#e03838" stroke-width="1.1"/><path d="M0.8 10.4L10.2 0.6" stroke="#e03838" stroke-width="1.3"/></svg></div>
<div class="a" style="left:4px;top:119px;width:788px;height:427px;background:#fff"></div>
<svg class="a" style="left:6px;top:120px" width="7" height="7"><path d="M0.8 6.2Q3 3.5 3.5 0.8Q4 3.5 6.2 6.2Q3.5 4.6 0.8 6.2Z" fill="none" stroke="#d83a3a" stroke-width="1"/></svg>
<div style="position:absolute;left:13.00px;top:119.35px;font-family:'Liberation Sans',sans-serif;font-size:6.6px;line-height:7.92px;color:#222;white-space:nowrap;transform:scaleX(0.7232);transform-origin:0 0;">Adobe Acrobat Professional - [2021-09-29 KAZPATENT для AK.pdf]</div>
<div class="a" style="left:741.5px;top:122.5px;width:4.5px;height:1px;background:#999"></div>
<div class="a" style="left:760.4px;top:121.8px;width:3.6px;height:3.4px;border:0.8px solid #555"></div>
<div class="a" style="left:761.4px;top:120.9px;width:3.4px;height:3.4px;border-top:0.8px solid #555;border-right:0.8px solid #555"></div>
<svg class="a" style="left:779px;top:120.8px" width="5" height="4.5"><path d="M0.3 0.3L4.7 4.2M4.7 0.3L0.3 4.2" stroke="#333" stroke-width="0.8"/></svg>
<svg class="a" style="left:7px;top:127.5px" width="7" height="9"><rect x="0.5" y="1" width="6" height="7.5" fill="#fff" stroke="#b44" stroke-width="0.7"/><path d="M1.2 6.5Q3 3.8 3.5 1.2Q4 3.8 5.8 6.5Q3.5 5.2 1.2 6.5Z" fill="none" stroke="#e02020" stroke-width="1"/></svg>
<div style="position:absolute;left:15.80px;top:127.65px;font-family:'Liberation Sans',sans-serif;font-size:6.6px;line-height:7.92px;color:#000;white-space:nowrap;transform:scaleX(0.7395);transform-origin:0 0;">Файл</div>
<div style="position:absolute;left:33.30px;top:127.65px;font-family:'Liberation Sans',sans-serif;font-size:6.6px;line-height:7.92px;color:#000;white-space:nowrap;transform:scaleX(0.7299);transform-origin:0 0;">Редактирование</div>
<div style="position:absolute;left:75.80px;top:127.65px;font-family:'Liberation Sans',sans-serif;font-size:6.6px;line-height:7.92px;color:#000;white-space:nowrap;transform:scaleX(0.7863);transform-origin:0 0;">Просмотр</div>
<div style="position:absolute;left:105.30px;top:127.65px;font-family:'Liberation Sans',sans-serif;font-size:6.6px;line-height:7.92px;color:#000;white-space:nowrap;transform:scaleX(0.7582);transform-origin:0 0;">Документ</div>
<div style="position:absolute;left:132.80px;top:127.65px;font-family:'Liberation Sans',sans-serif;font-size:6.6px;line-height:7.92px;color:#000;white-space:nowrap;transform:scaleX(0.7746);transform-origin:0 0;">Комментарии</div>
<div style="position:absolute;left:170.30px;top:127.65px;font-family:'Liberation Sans',sans-serif;font-size:6.6px;line-height:7.92px;color:#000;white-space:nowrap;transform:scaleX(0.7654);transform-origin:0 0;">Инструменты</div>
<div style="position:absolute;left:207.30px;top:127.65px;font-family:'Liberation Sans',sans-serif;font-size:6.6px;line-height:7.92px;color:#000;white-space:nowrap;transform:scaleX(0.7599);transform-origin:0 0;">Дополнительно</div>
<div style="position:absolute;left:249.30px;top:127.65px;font-family:'Liberation Sans',sans-serif;font-size:6.6px;line-height:7.92px;color:#000;white-space:nowrap;transform:scaleX(0.7629);transform-origin:0 0;">Окно</div>
<div style="position:absolute;left:266.80px;top:127.65px;font-family:'Liberation Sans',sans-serif;font-size:6.6px;line-height:7.92px;color:#000;white-space:nowrap;transform:scaleX(0.7300);transform-origin:0 0;">Справка</div>
<div class="a" style="left:769px;top:129.5px;width:7px;height:6.3px;background:#f8f8fa;border:0.5px solid #d8d8dc"></div>
<div class="a" style="left:777px;top:129.5px;width:7px;height:6.3px;background:#f8f8fa;border:0.5px solid #d8d8dc"></div>
<div class="a" style="left:785px;top:129.5px;width:7px;height:6.3px;background:#f8f8fa;border:0.5px solid #d8d8dc"></div>
<div class="a" style="left:771px;top:133.5px;width:3px;height:0.9px;background:#222"></div>
<div class="a" style="left:779.5px;top:131px;width:3px;height:3px;border:0.8px solid #999"></div>
<svg class="a" style="left:786.5px;top:130.8px" width="4" height="4"><path d="M0.3 0.3L3.7 3.7M3.7 0.3L0.3 3.7" stroke="#444" stroke-width="0.7"/></svg>
<div class="a" style="left:4px;top:136px;width:788px;height:27px;background:#f0eff3;border-top:1px solid #b0b0b4"></div>
<div class="a" style="left:4px;top:137px;width:412px;height:12.5px;border-right:1px solid #b8b8bc;border-bottom:1px solid #c8c8cc"></div>
<div class="a" style="left:4px;top:149.5px;width:258px;height:13.5px;border-right:1px solid #d0d0d4"></div>
<div class="a" style="left:4px;top:162px;width:788px;height:1px;background:#bdbdbd"></div>
<div class="a" style="left:5.5px;top:139px;width:1px;height:9px;border-left:1px dotted #9a9a9a"></div>
<div class="a" style="left:9.6px;top:141.5px;width:8.3px;height:6px;background:#f2c94c;border-radius:1px;"></div>
<div class="a" style="left:12.5px;top:139.5px;width:5px;height:4px;background:#4c86d0;border-radius:50%;"></div>
<div class="a" style="left:22.9px;top:142px;width:8.3px;height:5.6px;background:#f2c94c;border-radius:1px;"></div>
<div class="a" style="left:23.2px;top:139.6px;width:6px;height:5px;background:#3f9a8c;border-radius:50%;"></div>
<div class="a" style="left:36.2px;top:139.8px;width:8.3px;height:7.8px;background:#9a9a9a;border-radius:1px;"></div>
<div class="a" style="left:38.4px;top:140.2px;width:4px;height:2.8px;background:#e8e8e8;border-radius:0;"></div>
<div class="a" style="left:38.4px;top:144.4px;width:4px;height:3px;background:#d8d8d8;border-radius:0;"></div>
<div class="a" style="left:49px;top:141.5px;width:8.8px;height:5.5px;background:#b4b4b8;border-radius:2px;"></div>
<div class="a" style="left:50.5px;top:139.8px;width:6px;height:2.8px;background:#e6e6e6;border-radius:0;"></div>
<div class="a" style="left:50.5px;top:146.2px;width:6px;height:1.6px;background:#8060b0;border-radius:0;"></div>
<div class="a" style="left:61.5px;top:140px;width:8.7px;height:7.8px;background:#8c8c84;border-radius:1px;"></div>
<div class="a" style="left:62.2px;top:139.8px;width:7.2px;height:2.5px;background:#c84a3a;border-radius:0;"></div>
<div class="a" style="left:64px;top:141px;width:2.5px;height:2px;background:#48a048;border-radius:0;"></div>
<div class="a" style="left:63.5px;top:143.4px;width:5px;height:3.2px;background:#eaeaea;border-radius:0;"></div>
<div class="a" style="left:71.5px;top:142.5px;width:0;height:0;border-left:1.5px solid transparent;border-right:1.5px solid transparent;border-top:2px solid #222"></div>
<svg class="a" style="left:77.5px;top:139px" width="9" height="9"><path d="M1.5 7.5L6.5 2Q8 0.5 8 2.5L3.8 7.2Q2.5 8.4 2.4 7L6.2 3" fill="none" stroke="#3a6fc0" stroke-width="1.3"/></svg>
<div class="a" style="left:87.5px;top:142.5px;width:0;height:0;border-left:1.5px solid transparent;border-right:1.5px solid transparent;border-top:2px solid #222"></div>
<div class="a" style="left:94px;top:139.5px;width:8px;height:8px;background:#3a80c8;border-radius:50%;"></div>
<div class="a" style="left:95.5px;top:144px;width:7.3px;height:3.6px;background:#b8cce0;border-radius:1px;"></div>
<div class="a" style="left:95px;top:140.5px;width:4px;height:3px;background:#58b058;border-radius:50%;"></div>
<div class="a" style="left:107.3px;top:140.5px;width:3px;height:7px;background:#3a3a3a;border-radius:1px;"></div>
<div class="a" style="left:110.8px;top:140.5px;width:3px;height:7px;background:#3a3a3a;border-radius:1px;"></div>
<div class="a" style="left:109.5px;top:139.5px;width:2px;height:3px;background:#555;border-radius:0;"></div>
<div style="position:absolute;left:116.70px;top:139.54px;font-family:'Liberation Sans',sans-serif;font-size:6.3px;line-height:7.56px;color:#000;white-space:nowrap;transform:scaleX(0.6874);transform-origin:0 0;">Поиск</div>
<div class="a" style="left:131.3px;top:137.5px;width:1px;height:12px;background:#d4d4d8"></div>
<div class="a" style="left:133px;top:139px;width:1px;height:9px;border-left:1px dotted #9a9a9a"></div>
<div class="a" style="left:136.5px;top:139.2px;width:7.5px;height:8.6px;background:#fff;border-radius:0;border:1px solid #c84040"></div>
<div class="a" style="left:140.5px;top:138.5px;width:4px;height:3.5px;background:#e66;border-radius:1px;"></div>
<svg class="a" style="left:137px;top:141px" width="6" height="6"><path d="M0.8 5.2Q2.5 3 3 0.8Q3.5 3 5.2 5.2Q3 4 0.8 5.2Z" fill="none" stroke="#d02020" stroke-width="0.9"/></svg>
<div style="position:absolute;left:146.70px;top:139.54px;font-family:'Liberation Sans',sans-serif;font-size:6.3px;line-height:7.56px;color:#000;white-space:nowrap;transform:scaleX(0.6607);transform-origin:0 0;">Создать PDF</div>
<div class="a" style="left:174.5px;top:142.5px;width:0;height:0;border-left:1.5px solid transparent;border-right:1.5px solid transparent;border-top:2px solid #222"></div>
<div class="a" style="left:180px;top:138.5px;width:7.5px;height:5px;background:#fbe8e8;border-radius:50%;border:1px solid #d04848"></div>
<div class="a" style="left:182.5px;top:142.5px;width:5px;height:5px;background:#e8d030;border-radius:50%;"></div>
<div class="a" style="left:180px;top:144px;width:3px;height:3.5px;background:#5a88c8;border-radius:0;"></div>
<div style="position:absolute;left:190.70px;top:139.54px;font-family:'Liberation Sans',sans-serif;font-size:6.3px;line-height:7.56px;color:#000;white-space:nowrap;transform:scaleX(0.7231);transform-origin:0 0;">Комментарии и пометка</div>
<div class="a" style="left:244px;top:142.5px;width:0;height:0;border-left:1.5px solid transparent;border-right:1.5px solid transparent;border-top:2px solid #222"></div>
<div class="a" style="left:249.5px;top:139.5px;width:7px;height:8px;background:#f4f4f8;border-radius:1px;border:1px solid #9aa0c8"></div>
<div class="a" style="left:252.5px;top:138.8px;width:4.5px;height:4.5px;background:#e8d030;border-radius:50%;"></div>
<div class="a" style="left:249.5px;top:144.5px;width:3.6px;height:3.5px;background:#7048a8;border-radius:0;"></div>
<div style="position:absolute;left:258.00px;top:139.54px;font-family:'Liberation Sans',sans-serif;font-size:6.3px;line-height:7.56px;color:#000;white-space:nowrap;transform:scaleX(0.7203);transform-origin:0 0;">Отправить на рецензию</div>
<div class="a" style="left:310.5px;top:142.5px;width:0;height:0;border-left:1.5px solid transparent;border-right:1.5px solid transparent;border-top:2px solid #222"></div>
<div class="a" style="left:316.8px;top:142.2px;width:7px;height:5.6px;background:#e6b830;border-radius:1px;"></div>
<div class="a" style="left:317.8px;top:139px;width:5px;height:4.5px;border:1.2px solid #c09a28;border-bottom:none;border-radius:3px 3px 0 0"></div>
<div style="position:absolute;left:325.00px;top:139.54px;font-family:'Liberation Sans',sans-serif;font-size:6.3px;line-height:7.56px;color:#000;white-space:nowrap;transform:scaleX(0.7210);transform-origin:0 0;">Защита</div>
<div class="a" style="left:342.5px;top:142.5px;width:0;height:0;border-left:1.5px solid transparent;border-right:1.5px solid transparent;border-top:2px solid #222"></div>
<svg class="a" style="left:349px;top:138.5px" width="9" height="10"><path d="M1 9.2L7.8 1.2" stroke="#a82020" stroke-width="2.2" stroke-linecap="round"/><path d="M1 9.3H4" stroke="#888" stroke-width="0.6"/></svg>
<div style="position:absolute;left:358.80px;top:139.54px;font-family:'Liberation Sans',sans-serif;font-size:6.3px;line-height:7.56px;color:#000;white-space:nowrap;transform:scaleX(0.7019);transform-origin:0 0;">Подпись</div>
<div class="a" style="left:378px;top:142.5px;width:0;height:0;border-left:1.5px solid transparent;border-right:1.5px solid transparent;border-top:2px solid #222"></div>
<div class="a" style="left:384.5px;top:139px;width:8px;height:9px;background:#e4eaf2;border-radius:1px;border:1px solid #98a8c0"></div>
<div class="a" style="left:386px;top:141.5px;width:5px;height:1px;background:#556;border-radius:0;"></div>
<div class="a" style="left:386px;top:144px;width:5px;height:1px;background:#556;border-radius:0;"></div>
<div style="position:absolute;left:393.90px;top:139.54px;font-family:'Liberation Sans',sans-serif;font-size:6.3px;line-height:7.56px;color:#000;white-space:nowrap;transform:scaleX(0.7310);transform-origin:0 0;">Формы</div>
<div class="a" style="left:410.7px;top:142.5px;width:0;height:0;border-left:1.5px solid transparent;border-right:1.5px solid transparent;border-top:2px solid #222"></div>
<div class="a" style="left:5.5px;top:152px;width:1px;height:9px;border-left:1px dotted #9a9a9a"></div>
<div class="a" style="left:7.8px;top:150.3px;width:12px;height:11.5px;background:#fafafc;border-radius:1px;border:1px solid #dadade"></div>
<div class="a" style="left:10px;top:152px;width:7.8px;height:8px;background:#d4d4d8;border-radius:45%;border:1px solid #aaa"></div>
<svg class="a" style="left:21.5px;top:151px" width="9" height="11"><path d="M1.2 1H4.2M2.7 1V9.8M1.2 9.8H4.2" stroke="#222" stroke-width="0.9"/><path d="M4.8 3.8L8.2 6.2L4.8 8.4Z" fill="#333"/></svg>
<div style="position:absolute;left:31.20px;top:152.54px;font-family:'Liberation Sans',sans-serif;font-size:6.3px;line-height:7.56px;color:#000;white-space:nowrap;transform:scaleX(0.7099);transform-origin:0 0;">Выделение</div>
<div class="a" style="left:58.7px;top:152px;width:8.3px;height:8px;background:#3c3c3c;border-radius:1px;"></div>
<div class="a" style="left:60.5px;top:154px;width:4.8px;height:4px;background:#5872a8;border-radius:50%;"></div>
<div class="a" style="left:60px;top:151.2px;width:5px;height:1.5px;background:#888;border-radius:0;"></div>
<div class="a" style="left:69.3px;top:150px;width:1px;height:12px;background:#d4d4d8"></div>
<div class="a" style="left:72px;top:152px;width:1px;height:9px;border-left:1px dotted #9a9a9a"></div>
<svg class="a" style="left:75px;top:151px" width="10" height="11"><circle cx="4" cy="4.2" r="3.2" fill="#c0d4f0" stroke="#3a6ab0" stroke-width="1"/><path d="M2.5 4.2H5.5M4 2.7V5.7" stroke="#224" stroke-width="0.8"/><path d="M6.3 6.7L9 9.8" stroke="#c08838" stroke-width="1.6"/></svg>
<div class="a" style="left:86px;top:155.5px;width:0;height:0;border-left:1.5px solid transparent;border-right:1.5px solid transparent;border-top:2px solid #222"></div>
<div class="a" style="left:93.1px;top:151.5px;width:7px;height:9.5px;background:#f6faff;border-radius:0;border:1px solid #8cb0dc"></div>
<div class="a" style="left:105.5px;top:150.3px;width:10.5px;height:12px;background:#fafafc;border-radius:1px;border:1px solid #d8d8dc"></div>
<div class="a" style="left:107.8px;top:151.5px;width:6px;height:9.5px;background:#fff;border-radius:0;border:1px solid #7aa0d8"></div>
<div class="a" style="left:109.8px;top:153px;width:2px;height:6px;background:#3a6ab8;border-radius:0;"></div>
<div class="a" style="left:119.5px;top:151.5px;width:7.5px;height:9.5px;background:#f6faff;border-radius:0;border:1px solid #9ab8e0"></div>
<div class="a" style="left:121px;top:155.5px;width:4.5px;height:1.2px;background:#3a6ab8;border-radius:0;"></div>
<div class="a" style="left:132.8px;top:153px;width:6px;height:6px;background:#b0c8ec;border-radius:50%;border:1px solid #5a88c8"></div>
<div class="a" style="left:134.6px;top:155.6px;width:2.4px;height:0.9px;background:#2a4a88;border-radius:0;"></div>
<div class="a" style="left:142.4px;top:152px;width:20.3px;height:8.8px;background:#fff;border:1px solid #a0a0a0"></div>
<div style="position:absolute;left:145.00px;top:153.30px;font-family:'Liberation Sans',sans-serif;font-size:5.6px;line-height:6.72px;color:#222;white-space:nowrap;transform:scaleX(0.7680);transform-origin:0 0;">124%</div>
<div class="a" style="left:164.5px;top:155.5px;width:0;height:0;border-left:1.5px solid transparent;border-right:1.5px solid transparent;border-top:2px solid #222"></div>
<div class="a" style="left:171.3px;top:153px;width:6.7px;height:6.7px;background:#6a98d8;border-radius:50%;border:1px solid #3a68b0"></div>
<div class="a" style="left:173.4px;top:156px;width:2.6px;height:0.9px;background:#fff;border-radius:0;"></div>
<div class="a" style="left:174.2px;top:155.2px;width:0.9px;height:2.6px;background:#fff;border-radius:0;"></div>
<div class="a" style="left:181.3px;top:150px;width:1px;height:12px;background:#d4d4d8"></div>
<div class="a" style="left:183.3px;top:152px;width:1px;height:9px;border-left:1px dotted #9a9a9a"></div>
<div class="a" style="left:186.7px;top:151px;width:6.5px;height:8px;background:#fff;border-radius:0;border:1px solid #6a6a78"></div>
<div class="a" style="left:189.5px;top:150.8px;width:4px;height:4px;background:#4a70b8;border-radius:1px;"></div>
<div class="a" style="left:190px;top:155px;width:5px;height:5px;background:#e8e8ec;border-radius:50%;border:1px solid #999"></div>
<div class="a" style="left:197px;top:155.5px;width:0;height:0;border-left:1.5px solid transparent;border-right:1.5px solid transparent;border-top:2px solid #222"></div>
<div class="a" style="left:202.7px;top:150px;width:1px;height:12px;background:#d4d4d8"></div>
<div class="a" style="left:204px;top:152px;width:1px;height:9px;border-left:1px dotted #9a9a9a"></div>
<svg class="a" style="left:206.5px;top:151.5px" width="15" height="9"><path d="M1 1L3.2 4.5L5.4 1M3.2 4.5V8.3" stroke="#d42020" stroke-width="1.5" fill="none"/><path d="M6.5 2H9M7.7 2V8" stroke="#d42020" stroke-width="1.3"/><rect x="10" y="2" width="4.5" height="6" fill="#555" rx="1"/></svg>
<div class="a" style="left:223px;top:150px;width:1px;height:12px;background:#d4d4d8"></div>
<div class="a" style="left:224.5px;top:152px;width:1px;height:9px;border-left:1px dotted #9a9a9a"></div>
<div class="a" style="left:228.7px;top:152.5px;width:6.8px;height:6.8px;background:#3a9a3a;border-radius:50%;"></div>
<div class="a" style="left:230.8px;top:154px;width:2.6px;height:3.8px;background:#e8f4e8;border-radius:1px;"></div>
<div style="position:absolute;left:236.70px;top:152.54px;font-family:'Liberation Sans',sans-serif;font-size:6.3px;line-height:7.56px;color:#000;white-space:nowrap;transform:scaleX(0.7283);transform-origin:0 0;">Справка</div>
<div class="a" style="left:256.5px;top:155.5px;width:0;height:0;border-left:1.5px solid transparent;border-right:1.5px solid transparent;border-top:2px solid #222"></div>
<div class="a" style="left:4px;top:163px;width:788px;height:372px;background:#c9c9c9"></div>
<div class="a" style="left:4px;top:163px;width:8px;height:372px;background:#cfcfcf"></div>
<div class="a" style="left:12px;top:163px;width:2px;height:372px;background:#f6f6f6;border-right:1px solid #aaa"></div>
<div class="a" style="left:5px;top:168px;width:7px;height:29px;background:#f4f4f4;border-left:1px solid #b8b8b8;border-top:1px solid #c8c8c8"></div>
<div class="a" style="left:6px;top:197px;width:29px;height:6px;font-size:4.8px;line-height:6px;color:#222;white-space:nowrap;text-align:center;transform-origin:0 0;transform:rotate(-90deg)">Закладки</div>
<div class="a" style="left:5px;top:198px;width:7px;height:29px;background:#f4f4f4;border-left:1px solid #b8b8b8;border-top:1px solid #c8c8c8"></div>
<div class="a" style="left:6px;top:227px;width:29px;height:6px;font-size:4.8px;line-height:6px;color:#222;white-space:nowrap;text-align:center;transform-origin:0 0;transform:rotate(-90deg)">Подписи</div>
<div class="a" style="left:5px;top:228px;width:7px;height:31px;background:#f4f4f4;border-left:1px solid #b8b8b8;border-top:1px solid #c8c8c8"></div>
<div class="a" style="left:6px;top:259px;width:31px;height:6px;font-size:4.8px;line-height:6px;color:#222;white-space:nowrap;text-align:center;transform-origin:0 0;transform:rotate(-90deg)">Страницы</div>
<div class="a" style="left:5px;top:423px;width:7px;height:53px;background:#f4f4f4;border-left:1px solid #b8b8b8;border-top:1px solid #c8c8c8"></div>
<div class="a" style="left:6px;top:476px;width:53px;height:6px;font-size:4.8px;line-height:6px;color:#222;white-space:nowrap;text-align:center;transform-origin:0 0;transform:rotate(-90deg)">Вложенные файлы</div>
<div class="a" style="left:5px;top:477px;width:7px;height:40px;background:#f4f4f4;border-left:1px solid #b8b8b8;border-top:1px solid #c8c8c8"></div>
<div class="a" style="left:6px;top:517px;width:40px;height:6px;font-size:4.8px;line-height:6px;color:#222;white-space:nowrap;text-align:center;transform-origin:0 0;transform:rotate(-90deg)">Комментарии</div>
<div class="a" style="left:5px;top:517px;width:7px;height:3px;background:#a0a0a0"></div>
<div class="a" style="left:785px;top:163px;width:7px;height:372px;background:#f0f0f0;border-left:1px solid #dcdcdc"></div>
<div class="a" style="left:786px;top:165px;width:6px;height:9px;background:#fafafa;border-bottom:1px solid #d8d8d8"></div>
<div class="a" style="left:787.5px;top:167.5px;width:0;height:0;border-top:2.2px solid transparent;border-bottom:2.2px solid transparent;border-left:3px solid #111"></div>
<svg class="a" style="left:785.5px;top:176.5px" width="7" height="5"><path d="M1.5 3.5L3.5 1.5L5.5 3.5" stroke="#333" fill="none" stroke-width="0.8"/></svg>
<svg class="a" style="left:785.5px;top:529px" width="7" height="5"><path d="M1.5 1.5L3.5 3.5L5.5 1.5" stroke="#333" fill="none" stroke-width="0.8"/></svg>
<div class="a" style="left:4px;top:535px;width:788px;height:11px;background:#f1f0f4;border-top:1px solid #c4c4c4"></div>
<div class="a" style="left:9px;top:537px;width:7px;height:6px;background:#333;border:1px solid #666"></div>
<div class="a" style="left:22px;top:537px;width:6px;height:7px;background:#e4e8f0;border:1px solid #aab"></div>
<div class="a" style="left:338.5px;top:535px;width:1px;height:11px;background:#d6d6da"></div>
<svg class="a" style="left:343px;top:537px" width="80" height="9"><path d="M1 1V8" stroke="#3a6ab8" stroke-width="1.3"/><path d="M7 1L2.5 4.5L7 8Z" fill="#4a7ac8"/><path d="M19 1.5L15.5 4.5L19 7.5Z" fill="#6a9ad8"/><path d="M59 1.5L62.5 4.5L59 7.5Z" fill="#6a9ad8"/><path d="M71 1L75.5 4.5L71 8Z" fill="#4a7ac8"/><path d="M77 1V8" stroke="#3a6ab8" stroke-width="1.3"/></svg>
<div class="a" style="left:367.5px;top:536px;width:30px;height:9px;background:#fff;border:1px solid #c8c8c8"></div>
<div style="position:absolute;left:375.00px;top:538.07px;font-family:'Liberation Sans',sans-serif;font-size:5px;line-height:6.00px;color:#222;white-space:nowrap;transform:scaleX(0.9256);transform-origin:0 0;">9 из 10</div>
<div class="a" style="left:425px;top:535px;width:1px;height:11px;background:#d6d6da"></div>
<div class="a" style="left:431px;top:537px;width:7px;height:7px;border-radius:50%;background:#4a9a3a"></div><div class="a" style="left:433px;top:539px;width:3px;height:3px;background:#fff;border-radius:50%"></div>
<div class="a" style="left:444px;top:537px;width:7px;height:7px;border-radius:50%;background:#c4c4c4"></div><div class="a" style="left:446px;top:539px;width:3px;height:3px;background:#f4f4f4;border-radius:50%"></div>
<div class="a" style="left:456px;top:535px;width:1px;height:11px;background:#d6d6da"></div>
<div class="a" style="left:738px;top:535px;width:1px;height:11px;background:#d6d6da"></div>
<div class="a" style="left:741px;top:538px;width:7px;height:6px;background:#c8d8f0;border:1px solid #8ab0e0"></div>
<div class="a" style="left:755px;top:538px;width:7px;height:6px;background:#c8d8f0;border:1px solid #8ab0e0"></div>
<div class="a" style="left:768px;top:538px;width:7px;height:6px;background:#c8d8f0;border:1px solid #8ab0e0"></div>
<div class="a" style="left:781px;top:538px;width:7px;height:6px;background:#c8d8f0;border:1px solid #8ab0e0"></div>
<div class="a" style="left:74px;top:166px;width:651px;height:367px;background:#fff;box-shadow:1px 1px 0 #9a9a9a"></div>
<div style="position:absolute;left:612.00px;top:175.30px;font-family:'Liberation Serif',serif;font-size:15px;line-height:18.00px;color:#3a3a3a;white-space:nowrap;transform:scaleX(0.9245);transform-origin:0 0;">KAZ</div>
<div style="position:absolute;left:658.00px;top:175.30px;font-family:'Liberation Serif',serif;font-size:15px;line-height:18.00px;color:#3a3a3a;white-space:nowrap;transform:scaleX(0.9916);transform-origin:0 0;">PATENT</div>
<svg class="a" style="left:640px;top:175px" width="18" height="16" viewBox="0 0 18 16"><ellipse cx="9" cy="9.5" rx="7.8" ry="6" fill="#d6ecf0" stroke="#3a9ab2" stroke-width="1.1"/><path d="M9 1.5V15.5M5.5 4.5V15M12.5 4.5V15M1.5 9.5H16.5M2.5 12.5H15.5M2.5 6.5H15.5" stroke="#3a9ab2" stroke-width="0.9"/><path d="M6.5 0.8L9 3L11.5 0.8" stroke="#3a9ab2" fill="none" stroke-width="1"/></svg>
<div style="position:absolute;left:112.20px;top:211.86px;font-family:'Liberation Sans',sans-serif;font-size:23.5px;line-height:28.20px;color:#2f6fb6;white-space:nowrap;font-weight:bold;transform:scaleX(0.9848);transform-origin:0 0;-webkit-text-stroke:0.3px #2f6fb6;">Пропаганда</div>
<div style="position:absolute;left:111.40px;top:240.60px;font-family:'Liberation Sans',sans-serif;font-size:11.2px;line-height:13.44px;color:#2f6fb6;white-space:nowrap;font-weight:bold;font-style:italic;transform:scaleX(0.9378);transform-origin:0 0;-webkit-text-stroke:0.3px #2f6fb6;">изобретательской деятельности и</div>
<div style="position:absolute;left:111.40px;top:253.50px;font-family:'Liberation Sans',sans-serif;font-size:11.2px;line-height:13.44px;color:#2f6fb6;white-space:nowrap;font-weight:bold;font-style:italic;transform:scaleX(0.9533);transform-origin:0 0;-webkit-text-stroke:0.3px #2f6fb6;">распространение знаний в сфере интеллектуальной собственности</div>
<div class="a" style="left:102px;top:279.3px;width:596px;height:1.6px;background:#6ea8e4"></div>
<div class="a" style="left:107px;top:299px;width:138px;height:80px;background:#2f6fb6"></div>
<div class="a" style="left:259px;top:299px;width:135px;height:80px;background:#2f6fb6"></div>
<div class="a" style="left:408px;top:299px;width:134px;height:80px;background:#2f6fb6"></div>
<div class="a" style="left:556px;top:299px;width:134px;height:80px;background:#2f6fb6"></div>
<div style="position:absolute;left:119.40px;top:321.52px;font-family:'Liberation Sans',sans-serif;font-size:13.5px;line-height:16.20px;color:#ffffff;white-space:nowrap;transform:scaleX(1.0431);transform-origin:0 0;">Республиканский</div>
<div style="position:absolute;left:119.40px;top:337.62px;font-family:'Liberation Sans',sans-serif;font-size:13.5px;line-height:16.20px;color:#ffffff;white-space:nowrap;transform:scaleX(0.9970);transform-origin:0 0;">форум «Шапагат»</div>
<div style="position:absolute;left:280.80px;top:322.22px;font-family:'Liberation Sans',sans-serif;font-size:13.5px;line-height:16.20px;color:#ffffff;white-space:nowrap;transform:scaleX(1.0242);transform-origin:0 0;">Развитие сети</div>
<div style="position:absolute;left:308.00px;top:337.02px;font-family:'Liberation Sans',sans-serif;font-size:13.5px;line-height:16.20px;color:#ffffff;white-space:nowrap;transform:scaleX(0.9830);transform-origin:0 0;">ЦПТИ</div>
<div style="position:absolute;left:447.40px;top:315.22px;font-family:'Liberation Sans',sans-serif;font-size:13.5px;line-height:16.20px;color:#ffffff;white-space:nowrap;transform:scaleX(0.9918);transform-origin:0 0;">Работа с</div>
<div style="position:absolute;left:440.50px;top:330.22px;font-family:'Liberation Sans',sans-serif;font-size:13.5px;line-height:16.20px;color:#ffffff;white-space:nowrap;transform:scaleX(1.0243);transform-origin:0 0;">регионами</div>
<div style="position:absolute;left:438.40px;top:344.62px;font-family:'Liberation Sans',sans-serif;font-size:13.5px;line-height:16.20px;color:#ffffff;white-space:nowrap;transform:scaleX(1.0343);transform-origin:0 0;">Казахстана</div>
<div style="position:absolute;left:568.90px;top:330.02px;font-family:'Liberation Sans',sans-serif;font-size:13.5px;line-height:16.20px;color:#ffffff;white-space:nowrap;transform:scaleX(1.0044);transform-origin:0 0;">Работа с ВУЗами</div>
<div class="a" style="left:105px;top:385px;width:141px;height:109px;background:#fff;border:1px solid #a8c0e0"></div>
<div class="a" style="left:106px;top:386px;width:140px;height:93px;overflow:hidden;background:#dcd6cc">
<div style="position:absolute;left:0;top:0;width:140px;height:93px;filter:blur(0.6px)">
<div class="a" style="left:0;top:0;width:140px;height:70px;background:repeating-linear-gradient(180deg,#e2ddd4 0 4px,#cfc8bc 4px 5px)"></div>
<div class="a" style="left:0;top:0;width:140px;height:3px;background:#ece8e2"></div>
<div class="a" style="left:0;top:3px;width:140px;height:5px;background:#7e4a3a"></div>
<div class="a" style="left:12px;top:3px;width:56px;height:3px;background:#e8e2da"></div><div class="a" style="left:88px;top:3px;width:50px;height:3px;background:#e8e2da"></div>
<div class="a" style="left:1px;top:0;width:10px;height:69px;background:linear-gradient(90deg,#6e3a2c,#8a5040)"></div>
<div class="a" style="left:68px;top:0;width:18px;height:40px;background:linear-gradient(90deg,#74402e,#8e5444,#74402e)"></div>
<div class="a" style="left:130px;top:3px;width:10px;height:5px;background:#7e4a3a"></div>
<div class="a" style="left:27px;top:40px;width:4px;height:14px;background:#7a4434"></div>
<div class="a" style="left:44px;top:40px;width:4px;height:14px;background:#7a4434"></div>
<div class="a" style="left:100px;top:40px;width:4px;height:14px;background:#7a4434"></div>
<div class="a" style="left:117px;top:40px;width:4px;height:14px;background:#7a4434"></div>
<div class="a" style="left:126px;top:40px;width:4px;height:14px;background:#7a4434"></div>
<div class="a" style="left:18px;top:10px;width:39px;height:31px;background:#f2f4fb;border:1px solid #9a9aa8"></div>
<div class="a" style="left:97px;top:10px;width:38px;height:31px;background:#f2f4fb;border:1px solid #9a9aa8"></div>
<div class="a" style="left:22px;top:18px;width:30px;height:8px;background:repeating-linear-gradient(180deg,#c8cce0 0 1px,transparent 1px 3px)"></div>
<div class="a" style="left:101px;top:18px;width:30px;height:8px;background:repeating-linear-gradient(180deg,#c8cce0 0 1px,transparent 1px 3px)"></div>
<div class="a" style="left:57px;top:38px;width:41px;height:14px;background:linear-gradient(90deg,#b8b8e8,#e8e8f8 50%,#a8b0e0)"></div>
<div class="a" style="left:9px;top:49px;width:126px;height:10px;border-radius:10px 10px 0 0;background:repeating-linear-gradient(90deg,#f0eeec 0 3px,#a89080 3px 4px,#e8e6e8 4px 6px,#cdb8a8 6px 7px)"></div>
<div class="a" style="left:8px;top:57px;width:128px;height:12px;background:repeating-linear-gradient(90deg,#f6f6f8 0 4px,#c8ccd8 4px 5px,#eeeef2 5px 7px,#9aa0b4 7px 8px)"></div>
<div class="a" style="left:63px;top:54px;width:7px;height:22px;background:#3a4258"></div><div class="a" style="left:72px;top:56px;width:7px;height:20px;background:#5a6488"></div>
<div class="a" style="left:6px;top:66px;width:130px;height:9px;background:repeating-linear-gradient(90deg,#eeeef2 0 3px,#6a7a98 3px 5px,#e4e6ee 5px 7px,#5a5a68 7px 8px)"></div>
<div class="a" style="left:8px;top:74px;width:126px;height:4px;background:repeating-linear-gradient(90deg,#4a5a7a 0 3px,#8a9ab8 3px 5px,#3a3a40 5px 7px)"></div>
<div class="a" style="left:0;top:78px;width:140px;height:15px;background:linear-gradient(180deg,#d4ccc0,#dcd4c8)"></div>
<div class="a" style="left:0;top:72px;width:9px;height:21px;background:#2c2c30;border-radius:0 4px 0 0"></div>
<div class="a" style="left:136px;top:76px;width:4px;height:8px;background:#3a3a40"></div>
</div></div>
<div style="position:absolute;left:114.90px;top:479.70px;font-family:'Liberation Sans',sans-serif;font-size:9.3px;line-height:11.16px;color:#2b5288;white-space:nowrap;font-weight:bold;transform:scaleX(0.9865);transform-origin:0 0;">www.shapagat.kazpatent.kz</div>
<div class="a" style="left:258px;top:386px;width:135px;height:108px;background:#ffe699;border:1px solid #a0b4d8"></div>
<div style="position:absolute;left:273.20px;top:396.75px;font-family:'Liberation Sans',sans-serif;font-size:8.4px;line-height:10.08px;color:#262626;white-space:nowrap;">Летом</div>
<div style="position:absolute;left:301.94px;top:396.75px;font-family:'Liberation Sans',sans-serif;font-size:8.4px;line-height:10.08px;color:#262626;white-space:nowrap;">2021</div>
<div style="position:absolute;left:325.26px;top:396.75px;font-family:'Liberation Sans',sans-serif;font-size:8.4px;line-height:10.08px;color:#262626;white-space:nowrap;">года</div>
<div style="position:absolute;left:346.84px;top:396.75px;font-family:'Liberation Sans',sans-serif;font-size:8.4px;line-height:10.08px;color:#262626;white-space:nowrap;">подписано</div>
<div style="position:absolute;left:273.20px;top:406.75px;font-family:'Liberation Sans',sans-serif;font-size:8.4px;line-height:10.08px;color:#262626;white-space:nowrap;transform:scaleX(0.9359);transform-origin:0 0;">Соглашение с ВОИС;</div>
<div style="position:absolute;left:273.20px;top:425.95px;font-family:'Liberation Sans',sans-serif;font-size:8.4px;line-height:10.08px;color:#262626;white-space:nowrap;">Открыт</div>
<div style="position:absolute;left:303.55px;top:425.95px;font-family:'Liberation Sans',sans-serif;font-size:8.4px;line-height:10.08px;color:#262626;white-space:nowrap;">первый</div>
<div style="position:absolute;left:334.37px;top:425.95px;font-family:'Liberation Sans',sans-serif;font-size:8.4px;line-height:10.08px;color:#262626;white-space:nowrap;">ЦПТИ</div>
<div style="position:absolute;left:359.53px;top:425.95px;font-family:'Liberation Sans',sans-serif;font-size:8.4px;line-height:10.08px;color:#262626;white-space:nowrap;">на</div>
<div style="position:absolute;left:370.58px;top:425.95px;font-family:'Liberation Sans',sans-serif;font-size:8.4px;line-height:10.08px;color:#262626;white-space:nowrap;">базе</div>
<div style="position:absolute;left:273.20px;top:435.95px;font-family:'Liberation Sans',sans-serif;font-size:8.4px;line-height:10.08px;color:#262626;white-space:nowrap;transform:scaleX(0.9722);transform-origin:0 0;">Назарбаев Университета;</div>
<div style="position:absolute;left:273.20px;top:455.45px;font-family:'Liberation Sans',sans-serif;font-size:8.4px;line-height:10.08px;color:#262626;white-space:nowrap;">Ведется</div>
<div style="position:absolute;left:311.73px;top:455.45px;font-family:'Liberation Sans',sans-serif;font-size:8.4px;line-height:10.08px;color:#262626;white-space:nowrap;">работа</div>
<div style="position:absolute;left:345.45px;top:455.45px;font-family:'Liberation Sans',sans-serif;font-size:8.4px;line-height:10.08px;color:#262626;white-space:nowrap;">с</div>
<div style="position:absolute;left:356.30px;top:455.45px;font-family:'Liberation Sans',sans-serif;font-size:8.4px;line-height:10.08px;color:#262626;white-space:nowrap;">другими</div>
<div style="position:absolute;left:273.20px;top:464.85px;font-family:'Liberation Sans',sans-serif;font-size:8.4px;line-height:10.08px;color:#262626;white-space:nowrap;">ВУЗами</div>
<div style="position:absolute;left:310.40px;top:464.85px;font-family:'Liberation Sans',sans-serif;font-size:8.4px;line-height:10.08px;color:#262626;white-space:nowrap;">(проявили</div>
<div style="position:absolute;left:356.90px;top:464.85px;font-family:'Liberation Sans',sans-serif;font-size:8.4px;line-height:10.08px;color:#262626;white-space:nowrap;">интерес</div>
<div style="position:absolute;left:273.20px;top:474.35px;font-family:'Liberation Sans',sans-serif;font-size:8.4px;line-height:10.08px;color:#262626;white-space:nowrap;">уже порядка</div>
<div style="position:absolute;left:324.23px;top:474.35px;font-family:'Liberation Sans',sans-serif;font-size:8.4px;line-height:10.08px;color:#262626;white-space:nowrap;font-weight:bold;">10</div>
<div style="position:absolute;left:335.91px;top:474.35px;font-family:'Liberation Sans',sans-serif;font-size:8.4px;line-height:10.08px;color:#262626;white-space:nowrap;">организаций)</div>
<div class="a" style="left:264.2px;top:400.5px;width:2px;height:2px;border-radius:50%;background:#333"></div>
<div class="a" style="left:264.2px;top:429.7px;width:2px;height:2px;border-radius:50%;background:#333"></div>
<div class="a" style="left:264.2px;top:459.2px;width:2px;height:2px;border-radius:50%;background:#333"></div>
<div class="a" style="left:406px;top:386px;width:136px;height:108px;background:#c8e3d6;border:1px solid #b0c8c0"></div>
<svg class="a" style="left:405px;top:385px;filter:blur(0.3px)" width="138" height="75" viewBox="0 0 1056 574"><polygon points="20,240 50,210 100,180 160,175 210,195 215,250 180,270 120,285 60,280 30,270" fill="#a58be8" stroke="#7a8a80" stroke-width="3" stroke-opacity="0.5"/><polygon points="40,280 120,285 180,270 215,250 230,300 250,340 200,350 150,330 90,310" fill="#98a6f0" stroke="#7a8a80" stroke-width="3" stroke-opacity="0.5"/><polygon points="110,400 150,370 200,350 250,340 270,370 250,400 245,490 200,470 170,460 150,420" fill="#8cc6f4" stroke="#7a8a80" stroke-width="3" stroke-opacity="0.5"/><polygon points="210,195 300,195 380,195 420,230 450,300 400,320 330,360 290,370 260,350 230,300 215,250" fill="#80dcd4" stroke="#7a8a80" stroke-width="3" stroke-opacity="0.5"/><polygon points="380,100 500,80 505,150 490,180 540,210 470,260 440,290 420,230 380,195 360,160" fill="#6ac4a0" stroke="#7a8a80" stroke-width="3" stroke-opacity="0.5"/><polygon points="505,80 580,60 640,80 690,100 690,135 620,120 560,130 510,150" fill="#90e0a2" stroke="#7a8a80" stroke-width="3" stroke-opacity="0.5"/><polygon points="510,150 560,120 620,120 690,135 700,190 640,210 560,210 490,190" fill="#e6ea84" stroke="#7a8a80" stroke-width="3" stroke-opacity="0.5"/><polygon points="690,100 770,90 830,180 780,220 700,190 690,135" fill="#b8c67c" stroke="#7a8a80" stroke-width="3" stroke-opacity="0.5"/><polygon points="440,300 540,210 640,210 700,190 780,220 770,320 700,345 600,350 530,350 430,320" fill="#f0d052" stroke="#7a8a80" stroke-width="3" stroke-opacity="0.5"/><polygon points="780,220 830,180 900,200 960,220 1020,240 990,290 900,340 850,320 770,320" fill="#e8b054" stroke="#7a8a80" stroke-width="3" stroke-opacity="0.5"/><polygon points="330,360 400,300 450,310 530,350 540,440 500,460 440,420 370,400" fill="#d2b2dc" stroke="#7a8a80" stroke-width="3" stroke-opacity="0.5"/><polygon points="530,350 590,350 600,420 610,460 560,510 500,470 540,440" fill="#f092a2" stroke="#7a8a80" stroke-width="3" stroke-opacity="0.5"/><polygon points="590,350 700,345 720,390 700,440 640,450 610,460 600,420" fill="#f8b062" stroke="#7a8a80" stroke-width="3" stroke-opacity="0.5"/><polygon points="700,345 770,320 850,320 900,350 870,400 860,460 800,440 740,440 700,440 720,390" fill="#f8b282" stroke="#7a8a80" stroke-width="3" stroke-opacity="0.5"/></svg>
<div class="a" style="left:406px;top:458px;width:136px;height:36px;background:#5b9bd8;border:1px solid #4a88c8"></div>
<div style="position:absolute;left:426.50px;top:463.61px;font-family:'Liberation Sans',sans-serif;font-size:7.7px;line-height:9.24px;color:#ffffff;white-space:nowrap;transform:scaleX(0.9870);transform-origin:0 0;-webkit-text-stroke:0.15px #fff;">С привлечением акиматов,</div>
<div style="position:absolute;left:434.60px;top:472.51px;font-family:'Liberation Sans',sans-serif;font-size:7.7px;line-height:9.24px;color:#ffffff;white-space:nowrap;transform:scaleX(0.9806);transform-origin:0 0;-webkit-text-stroke:0.15px #fff;">Национальной палаты</div>
<div style="position:absolute;left:413.00px;top:481.11px;font-family:'Liberation Sans',sans-serif;font-size:7.7px;line-height:9.24px;color:#ffffff;white-space:nowrap;transform:scaleX(0.9757);transform-origin:0 0;-webkit-text-stroke:0.15px #fff;">предпринимателей РК «Атамекен»</div>
<div class="a" style="left:555px;top:385px;width:136px;height:38px;background:#5b9bd8;border:1px solid #4a80c0"></div>
<div style="position:absolute;left:591.70px;top:389.81px;font-family:'Liberation Sans',sans-serif;font-size:7.7px;line-height:9.24px;color:#ffffff;white-space:nowrap;transform:scaleX(0.9814);transform-origin:0 0;-webkit-text-stroke:0.15px #fff;">Открыта кафедра</div>
<div style="position:absolute;left:563.40px;top:398.71px;font-family:'Liberation Sans',sans-serif;font-size:7.7px;line-height:9.24px;color:#ffffff;white-space:nowrap;transform:scaleX(0.9921);transform-origin:0 0;-webkit-text-stroke:0.15px #fff;">интеллектуальной собственности</div>
<div style="position:absolute;left:583.60px;top:407.71px;font-family:'Liberation Sans',sans-serif;font-size:7.7px;line-height:9.24px;color:#ffffff;white-space:nowrap;transform:scaleX(0.9838);transform-origin:0 0;-webkit-text-stroke:0.15px #fff;">Университета КазГЮУ</div>
<svg class="a" style="left:553px;top:420px;filter:blur(0.35px)" width="140" height="78" viewBox="0 0 1030 574"><defs><linearGradient id="sky" x1="0" y1="0" x2="0" y2="1"><stop offset="0" stop-color="#6e9ee2"/><stop offset="0.55" stop-color="#a8c8ee"/><stop offset="1" stop-color="#d8e6f4"/></linearGradient></defs><rect x="18" y="22" width="992" height="420" fill="url(#sky)"/><ellipse cx="130" cy="110" rx="80" ry="75" fill="#fff" opacity="0.95"/><ellipse cx="300" cy="135" rx="55" ry="45" fill="#fff" opacity="0.9"/><ellipse cx="680" cy="200" rx="100" ry="80" fill="#fff" opacity="0.95"/><ellipse cx="880" cy="170" rx="140" ry="60" fill="#fff" opacity="0.8"/><ellipse cx="620" cy="40" rx="60" ry="20" fill="#fff" opacity="0.6"/><rect x="18" y="30" width="48" height="310" fill="#e6d090"/><polygon points="18,165 370,215 370,410 18,420" fill="#e6c884"/><rect x="60" y="225" width="12" height="18" fill="#6a5238"/><rect x="92" y="225" width="12" height="18" fill="#6a5238"/><rect x="124" y="225" width="12" height="18" fill="#6a5238"/><rect x="156" y="225" width="12" height="18" fill="#6a5238"/><rect x="188" y="225" width="12" height="18" fill="#6a5238"/><rect x="220" y="225" width="12" height="18" fill="#6a5238"/><rect x="252" y="225" width="12" height="18" fill="#6a5238"/><rect x="284" y="225" width="12" height="18" fill="#6a5238"/><rect x="316" y="225" width="12" height="18" fill="#6a5238"/><rect x="348" y="225" width="12" height="18" fill="#6a5238"/><rect x="60" y="262" width="12" height="18" fill="#6a5238"/><rect x="92" y="262" width="12" height="18" fill="#6a5238"/><rect x="124" y="262" width="12" height="18" fill="#6a5238"/><rect x="156" y="262" width="12" height="18" fill="#6a5238"/><rect x="188" y="262" width="12" height="18" fill="#6a5238"/><rect x="220" y="262" width="12" height="18" fill="#6a5238"/><rect x="252" y="262" width="12" height="18" fill="#6a5238"/><rect x="284" y="262" width="12" height="18" fill="#6a5238"/><rect x="316" y="262" width="12" height="18" fill="#6a5238"/><rect x="348" y="262" width="12" height="18" fill="#6a5238"/><rect x="60" y="298" width="12" height="18" fill="#6a5238"/><rect x="92" y="298" width="12" height="18" fill="#6a5238"/><rect x="124" y="298" width="12" height="18" fill="#6a5238"/><rect x="156" y="298" width="12" height="18" fill="#6a5238"/><rect x="188" y="298" width="12" height="18" fill="#6a5238"/><rect x="220" y="298" width="12" height="18" fill="#6a5238"/><rect x="252" y="298" width="12" height="18" fill="#6a5238"/><rect x="284" y="298" width="12" height="18" fill="#6a5238"/><rect x="316" y="298" width="12" height="18" fill="#6a5238"/><rect x="348" y="298" width="12" height="18" fill="#6a5238"/><rect x="60" y="330" width="12" height="18" fill="#6a5238"/><rect x="92" y="330" width="12" height="18" fill="#6a5238"/><rect x="124" y="330" width="12" height="18" fill="#6a5238"/><rect x="156" y="330" width="12" height="18" fill="#6a5238"/><rect x="188" y="330" width="12" height="18" fill="#6a5238"/><rect x="220" y="330" width="12" height="18" fill="#6a5238"/><rect x="252" y="330" width="12" height="18" fill="#6a5238"/><rect x="284" y="330" width="12" height="18" fill="#6a5238"/><rect x="316" y="330" width="12" height="18" fill="#6a5238"/><rect x="348" y="330" width="12" height="18" fill="#6a5238"/><polygon points="295,150 400,110 530,115 620,170 620,390 295,400" fill="#ecd498"/><rect x="405" y="150" width="12" height="16" fill="#6a5a44"/><rect x="433" y="150" width="12" height="16" fill="#6a5a44"/><rect x="461" y="150" width="12" height="16" fill="#6a5a44"/><rect x="489" y="150" width="12" height="16" fill="#6a5a44"/><rect x="517" y="150" width="12" height="16" fill="#6a5a44"/><rect x="545" y="150" width="12" height="16" fill="#6a5a44"/><rect x="573" y="150" width="12" height="16" fill="#6a5a44"/><rect x="601" y="150" width="12" height="16" fill="#6a5a44"/><rect x="405" y="185" width="12" height="16" fill="#6a5a44"/><rect x="433" y="185" width="12" height="16" fill="#6a5a44"/><rect x="461" y="185" width="12" height="16" fill="#6a5a44"/><rect x="489" y="185" width="12" height="16" fill="#6a5a44"/><rect x="517" y="185" width="12" height="16" fill="#6a5a44"/><rect x="545" y="185" width="12" height="16" fill="#6a5a44"/><rect x="573" y="185" width="12" height="16" fill="#6a5a44"/><rect x="601" y="185" width="12" height="16" fill="#6a5a44"/><rect x="405" y="220" width="12" height="16" fill="#6a5a44"/><rect x="433" y="220" width="12" height="16" fill="#6a5a44"/><rect x="461" y="220" width="12" height="16" fill="#6a5a44"/><rect x="489" y="220" width="12" height="16" fill="#6a5a44"/><rect x="517" y="220" width="12" height="16" fill="#6a5a44"/><rect x="545" y="220" width="12" height="16" fill="#6a5a44"/><rect x="573" y="220" width="12" height="16" fill="#6a5a44"/><rect x="601" y="220" width="12" height="16" fill="#6a5a44"/><rect x="405" y="258" width="12" height="16" fill="#6a5a44"/><rect x="433" y="258" width="12" height="16" fill="#6a5a44"/><rect x="461" y="258" width="12" height="16" fill="#6a5a44"/><rect x="489" y="258" width="12" height="16" fill="#6a5a44"/><rect x="517" y="258" width="12" height="16" fill="#6a5a44"/><rect x="545" y="258" width="12" height="16" fill="#6a5a44"/><rect x="573" y="258" width="12" height="16" fill="#6a5a44"/><rect x="601" y="258" width="12" height="16" fill="#6a5a44"/><rect x="405" y="292" width="12" height="16" fill="#6a5a44"/><rect x="433" y="292" width="12" height="16" fill="#6a5a44"/><rect x="461" y="292" width="12" height="16" fill="#6a5a44"/><rect x="489" y="292" width="12" height="16" fill="#6a5a44"/><rect x="517" y="292" width="12" height="16" fill="#6a5a44"/><rect x="545" y="292" width="12" height="16" fill="#6a5a44"/><rect x="573" y="292" width="12" height="16" fill="#6a5a44"/><rect x="601" y="292" width="12" height="16" fill="#6a5a44"/><rect x="405" y="330" width="12" height="16" fill="#6a5a44"/><rect x="433" y="330" width="12" height="16" fill="#6a5a44"/><rect x="461" y="330" width="12" height="16" fill="#6a5a44"/><rect x="489" y="330" width="12" height="16" fill="#6a5a44"/><rect x="517" y="330" width="12" height="16" fill="#6a5a44"/><rect x="545" y="330" width="12" height="16" fill="#6a5a44"/><rect x="573" y="330" width="12" height="16" fill="#6a5a44"/><rect x="601" y="330" width="12" height="16" fill="#6a5a44"/><rect x="430" y="230" width="210" height="22" fill="#f4ecd8"/><rect x="445" y="250" width="12" height="120" fill="#f6f2e6"/><rect x="471" y="250" width="12" height="120" fill="#f6f2e6"/><rect x="497" y="250" width="12" height="120" fill="#f6f2e6"/><rect x="523" y="250" width="12" height="120" fill="#f6f2e6"/><rect x="549" y="250" width="12" height="120" fill="#f6f2e6"/><rect x="575" y="250" width="12" height="120" fill="#f6f2e6"/><rect x="601" y="250" width="12" height="120" fill="#f6f2e6"/><rect x="627" y="250" width="12" height="120" fill="#f6f2e6"/><polygon points="620,270 830,295 830,410 620,400" fill="#e0c47e"/><rect x="640" y="300" width="10" height="15" fill="#6a5a44"/><rect x="666" y="300" width="10" height="15" fill="#6a5a44"/><rect x="692" y="300" width="10" height="15" fill="#6a5a44"/><rect x="718" y="300" width="10" height="15" fill="#6a5a44"/><rect x="744" y="300" width="10" height="15" fill="#6a5a44"/><rect x="770" y="300" width="10" height="15" fill="#6a5a44"/><rect x="796" y="300" width="10" height="15" fill="#6a5a44"/><rect x="640" y="335" width="10" height="15" fill="#6a5a44"/><rect x="666" y="335" width="10" height="15" fill="#6a5a44"/><rect x="692" y="335" width="10" height="15" fill="#6a5a44"/><rect x="718" y="335" width="10" height="15" fill="#6a5a44"/><rect x="744" y="335" width="10" height="15" fill="#6a5a44"/><rect x="770" y="335" width="10" height="15" fill="#6a5a44"/><rect x="796" y="335" width="10" height="15" fill="#6a5a44"/><rect x="640" y="370" width="10" height="15" fill="#6a5a44"/><rect x="666" y="370" width="10" height="15" fill="#6a5a44"/><rect x="692" y="370" width="10" height="15" fill="#6a5a44"/><rect x="718" y="370" width="10" height="15" fill="#6a5a44"/><rect x="744" y="370" width="10" height="15" fill="#6a5a44"/><rect x="770" y="370" width="10" height="15" fill="#6a5a44"/><rect x="796" y="370" width="10" height="15" fill="#6a5a44"/><rect x="810" y="240" width="192" height="170" fill="#f0e2bc"/><rect x="840" y="280" width="10" height="22" fill="#7a6a54"/><rect x="864" y="280" width="10" height="22" fill="#7a6a54"/><rect x="888" y="280" width="10" height="22" fill="#7a6a54"/><rect x="912" y="280" width="10" height="22" fill="#7a6a54"/><rect x="936" y="280" width="10" height="22" fill="#7a6a54"/><rect x="960" y="280" width="10" height="22" fill="#7a6a54"/><rect x="984" y="280" width="10" height="22" fill="#7a6a54"/><rect x="840" y="330" width="10" height="22" fill="#7a6a54"/><rect x="864" y="330" width="10" height="22" fill="#7a6a54"/><rect x="888" y="330" width="10" height="22" fill="#7a6a54"/><rect x="912" y="330" width="10" height="22" fill="#7a6a54"/><rect x="936" y="330" width="10" height="22" fill="#7a6a54"/><rect x="960" y="330" width="10" height="22" fill="#7a6a54"/><rect x="984" y="330" width="10" height="22" fill="#7a6a54"/><ellipse cx="150" cy="385" rx="130" ry="40" fill="#3a4030" opacity="0.6"/><ellipse cx="700" cy="370" rx="40" ry="30" fill="#3a4a30" opacity="0.7"/><ellipse cx="920" cy="400" rx="40" ry="25" fill="#3a4a30" opacity="0.7"/><polygon points="420,350 600,380 790,410 790,440 380,440" fill="#9c9c98"/><rect x="18" y="420" width="992" height="55" fill="#b8aea4"/><rect x="180" y="452" width="830" height="12" fill="#d2b84a"/><rect x="18" y="472" width="992" height="80" fill="#94a45c"/></svg>
<div class="a" style="left:102px;top:503px;width:596px;height:2px;background:#787878"></div>
<div style="position:absolute;left:124.00px;top:510.81px;font-family:'Liberation Sans',sans-serif;font-size:7.6px;line-height:9.12px;color:#8c8c8c;white-space:nowrap;transform:scaleX(0.8906);transform-origin:0 0;">kazpatent.kz</div>
<div style="position:absolute;left:672.50px;top:511.40px;font-family:'Liberation Serif',serif;font-size:7.5px;line-height:9.00px;color:#777;white-space:nowrap;">9</div>
<svg class="a" style="left:599px;top:373px" width="7" height="8"><path d="M2 1V5L1 4.5Q0.3 5 1 6L3 7.5H6L6.5 5V3.5Q6 3 5.5 3.5V3Q5 2.5 4.5 3V1Q3.3 0 2 1Z" fill="#fff" stroke="#222" stroke-width="0.6"/></svg>
</body></html>
